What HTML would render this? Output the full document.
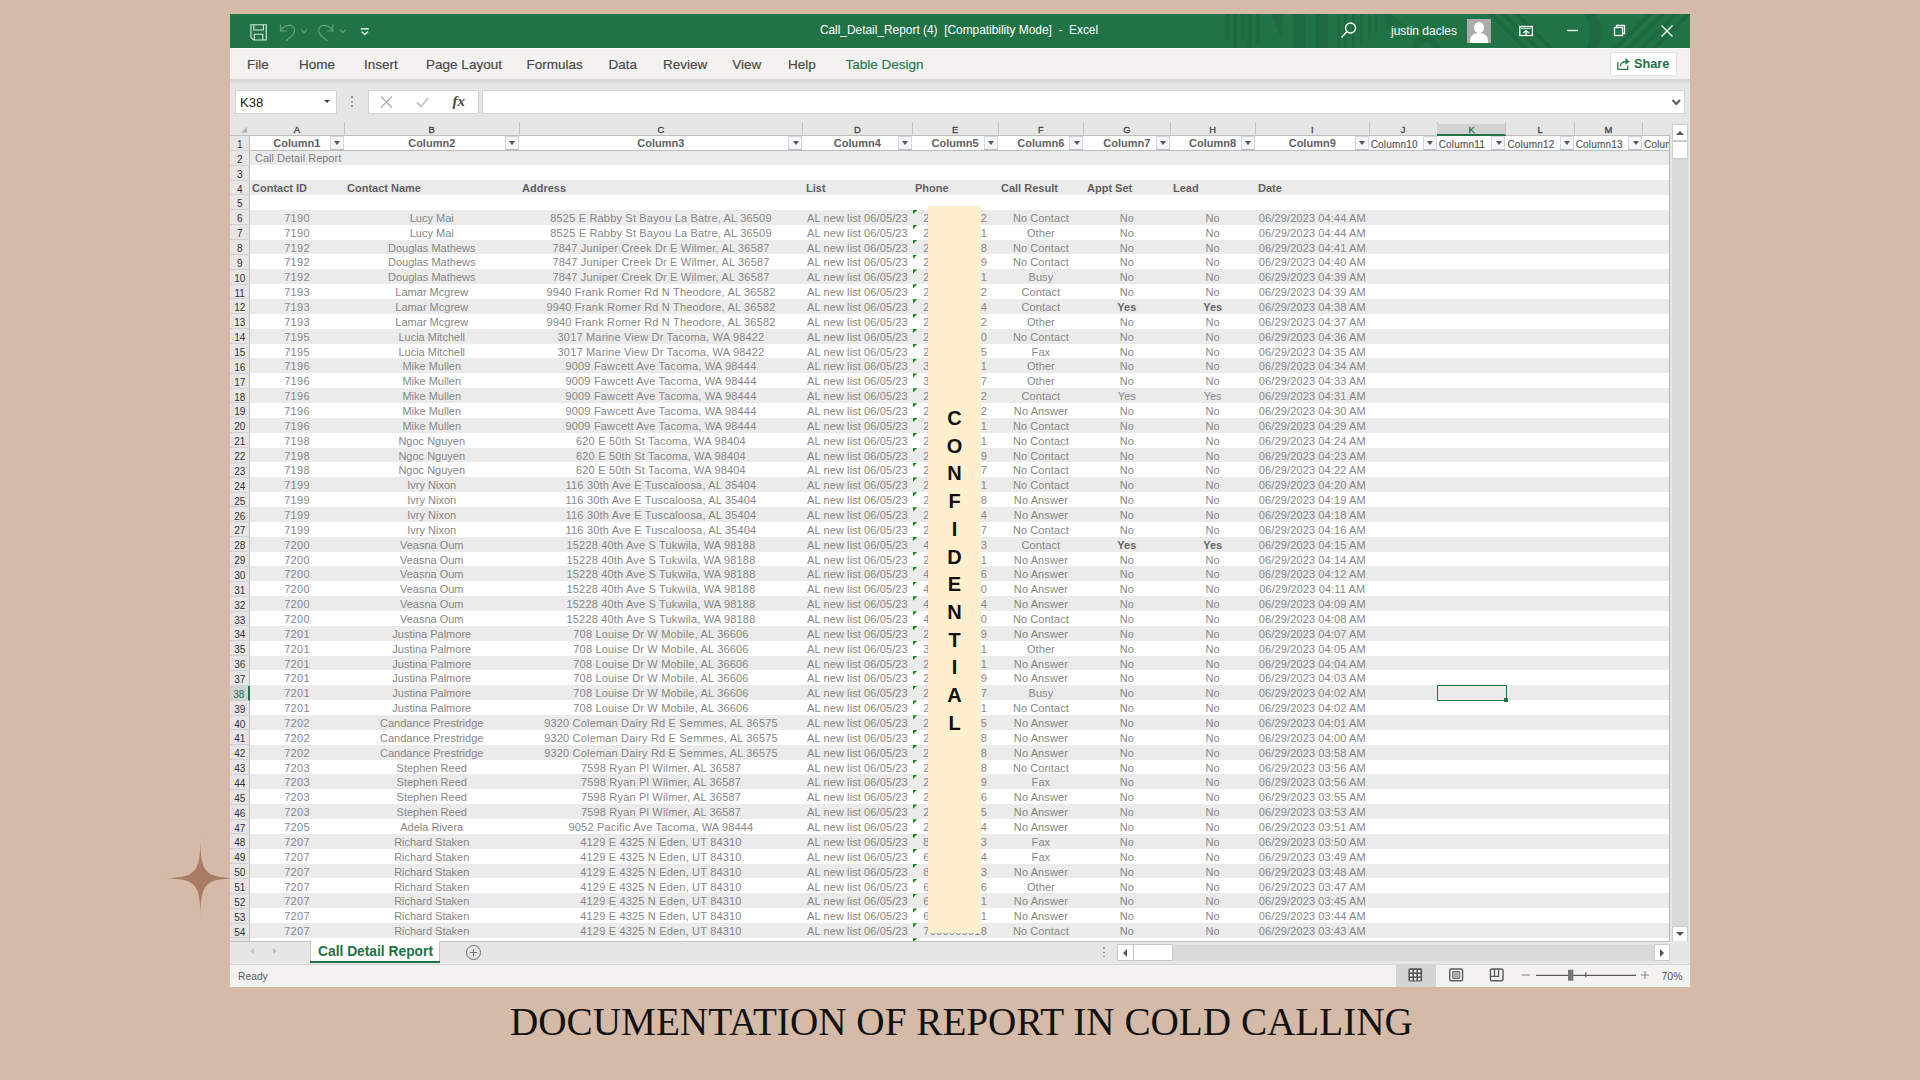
<!DOCTYPE html>
<html><head><meta charset="utf-8"><title>Excel</title>
<style>
html,body{margin:0;padding:0}
body{width:1920px;height:1080px;background:#d5baa8;position:relative;overflow:hidden;font-family:"Liberation Sans",sans-serif}
.a{position:absolute}
.t{position:absolute;white-space:nowrap}
.c{position:absolute;white-space:nowrap;text-align:center;font-size:11px;color:#878787;height:15px;line-height:15px}
.hd{position:absolute;white-space:nowrap;font-size:11px;font-weight:bold;color:#5f5f5f;line-height:15px}
.rn{position:absolute;left:230px;width:19.5px;text-align:center;font-size:10px;color:#262626;line-height:15px;border-bottom:1px solid #d0d0d0;box-sizing:border-box}
.tab{position:absolute;top:48.5px;height:31px;line-height:31px;font-size:13.5px;color:#4a4a4a;-webkit-text-stroke:0.2px #4a4a4a}
.tri{position:absolute;width:4.3px;height:4.3px;background:#168a16;clip-path:polygon(0 0,100% 0,0 100%)}
.dd{position:absolute;width:14px;height:14.5px;background:#f4f6f9;border:1px solid #d3d7dd;border-bottom-color:#b8bcc4;box-sizing:border-box}
.dd:after{content:"";position:absolute;left:3.5px;top:4.5px;border-left:3px solid transparent;border-right:3px solid transparent;border-top:4px solid #555}
</style></head><body>

<svg class="a" style="left:150px;top:826px" width="100" height="104" viewBox="0 0 100 104">
<path d="M50.4 11.0 C50.4 47.9 54.7 52.2 91.6 52.2 C54.7 52.2 50.4 56.5 50.4 93.4 C50.4 56.5 46.1 52.2 9.2 52.2 C46.1 52.2 50.4 47.9 50.4 11.0 Z" fill="#a87c62"/>
</svg>
<div class="a" style="left:230px;top:14px;width:1460px;height:973px;background:#e6e6e6"></div>
<div class="a" style="left:230px;top:14px;width:1460px;height:34px;background:#217346;overflow:hidden">
<svg class="a" style="left:980px;top:0" width="480" height="34" viewBox="1210 0 480 34">
<g fill="#1f6941">
<rect x="1225.6" y="0" width="4.2" height="26"/><rect x="1233" y="0" width="4" height="34"/><rect x="1240.7" y="0" width="3.9" height="26"/>
<rect x="1247.5" y="0" width="3.8" height="34"/><rect x="1255.8" y="0" width="3.8" height="31"/>
<path d="M1271 0 H1284 L1281 24 Z"/>
<rect x="1292.8" y="0" width="12.5" height="34"/><rect x="1315.7" y="0" width="12.5" height="34"/>
<rect x="1337.5" y="0" width="2.5" height="34"/><rect x="1344" y="0" width="2.5" height="34"/><rect x="1352" y="0" width="2.5" height="34"/>
<rect x="1360" y="0" width="2.5" height="30"/><rect x="1368" y="0" width="2.5" height="26"/><rect x="1375" y="0" width="2" height="20"/>
<path d="M1385 0 C1390 0 1402 6 1404 14 C1400 10 1392 10 1387 16 C1384 10 1384 4 1385 0Z"/>
<path d="M1412 34 C1412 26 1420 20 1428 22 C1436 24 1440 30 1440 34 H1433 C1432 30 1428 27 1425 28 C1421 29 1419 31 1419 34Z"/>
<path d="M1488 0 H1494 L1528 34 H1522Z"/><path d="M1500 0 H1506 L1540 34 H1534Z"/><path d="M1514 0 H1520 L1554 34 H1548Z"/>
<path d="M1585 0 H1596 C1602 10 1602 24 1598 34 H1587 C1591 24 1591 10 1585 0Z"/>
</g></svg>
<svg class="a" style="left:1230px;top:0" width="230" height="34" viewBox="1460 0 230 34">
<g fill="#1f6941">
<path d="M1613 34 L1647 0 H1653 L1619 34Z"/><path d="M1626 34 L1660 0 H1666 L1632 34Z"/><path d="M1639 34 L1673 0 H1679 L1645 34Z"/><path d="M1652 34 L1686 0 H1690 V2 L1658 34Z"/>
</g></svg>
</div>
<svg class="a" style="left:246px;top:20px" width="130" height="24" viewBox="0 0 130 24">
<g fill="none" stroke="#d3e5da" stroke-width="1.15">
<path d="M4.9 4.7 H20.3 V20 H7.6 L4.9 17.3 Z"/><path d="M7.8 4.7 V10 H17.4 V4.7"/><path d="M8.3 20 V14.2 H16.8 V20"/>
</g>
<g fill="none" stroke="#63a07c" stroke-width="1.2">
<path d="M34.5 4.4 V11 H41"/><path d="M34.5 11 C38 4 48.6 3 48.6 10.5 C48.6 13.5 47 15 40 21"/><path d="M55.3 9.6 L58.1 12.6 L61 9.6"/>
<path d="M86.8 4.4 V11 H80.3"/><path d="M86.8 11 C83.3 4 72.7 3 72.7 10.5 C72.7 13.5 74.3 15 81.3 21"/><path d="M94 9.6 L96.75 12.6 L99.5 9.6"/>
</g>
<rect x="114.8" y="8" width="8" height="1.7" fill="#cfe2d6"/>
<path d="M115.6 11.6 L118.8 14.4 L122 11.6" fill="none" stroke="#cfe2d6" stroke-width="1.5"/>
</svg>
<div class="t" style="left:702px;top:14px;width:514px;text-align:center;line-height:32px;font-size:11.9px;color:#fff">Call_Detail_Report (4)&nbsp; [Compatibility Mode]&nbsp; -&nbsp; Excel</div>
<svg class="a" style="left:1336px;top:18px" width="350" height="26" viewBox="0 0 350 26">
<g fill="none" stroke="#fff" stroke-width="1.3">
<circle cx="14.5" cy="10" r="5"/><path d="M10.8 13.8 L5.5 19.5"/>
<rect x="183.8" y="8.5" width="12.6" height="9"/><path d="M185 10.3 H195.3" stroke-width="0.9"/><path d="M190.1 17 V12.3 M187.4 15 L190.1 12.3 L192.8 15"/>
<path d="M231 12.5 H242"/>
<rect x="278.5" y="9.5" width="8" height="8"/><path d="M280.5 9.5 V7.5 H288.5 V15.5 H286.5"/>
<path d="M325.5 7.5 L336.5 18.5 M336.5 7.5 L325.5 18.5"/>
</g></svg>
<div class="t" style="left:1391px;top:14px;line-height:34px;font-size:12px;color:#fff">justin dacles</div>
<div class="a" style="left:1467px;top:19px;width:24px;height:24px;background:#ababab;overflow:hidden">
<div class="a" style="left:7px;top:3px;width:10px;height:11px;border-radius:50%;background:#fff"></div>
<div class="a" style="left:3px;top:14px;width:18px;height:14px;border-radius:8px 8px 0 0;background:#fff"></div></div>
<div class="a" style="left:230px;top:48px;width:1460px;height:31px;background:#f3f2f1;border-top:1px solid #fbfafa;box-sizing:border-box"></div>
<div class="tab" style="left:247.0px">File</div>
<div class="tab" style="left:299.0px">Home</div>
<div class="tab" style="left:363.9px">Insert</div>
<div class="tab" style="left:426.1px">Page Layout</div>
<div class="tab" style="left:526.5px">Formulas</div>
<div class="tab" style="left:608.4px">Data</div>
<div class="tab" style="left:663.1px">Review</div>
<div class="tab" style="left:732.2px">View</div>
<div class="tab" style="left:788.0px">Help</div>
<div class="tab" style="left:845.5px;color:#2b7a4f;-webkit-text-stroke:0.2px #2b7a4f">Table Design</div>
<div class="a" style="left:1610px;top:52px;width:67px;height:23.5px;background:#fff;border:1px solid #e6e4e2;border-radius:2px;box-sizing:border-box"></div>
<svg class="a" style="left:1616px;top:56px" width="16" height="16" viewBox="0 0 16 16"><g fill="none" stroke="#2b7a4f" stroke-width="1.3"><path d="M1.8 6 V13.4 H11.7 V9.6"/><path d="M4.2 10.5 C4.6 7 7 5.5 10.5 5.5"/></g><path d="M9.5 1.8 L13.5 5.5 L9.5 9 Z" fill="#2b7a4f"/></svg>
<div class="t" style="left:1634px;top:52.5px;line-height:23px;font-size:12.7px;font-weight:bold;color:#217346">Share</div>
<div class="a" style="left:230px;top:79px;width:1460px;height:5px;background:linear-gradient(#d2d2d2,#e6e6e6)"></div>
<div class="a" style="left:235px;top:90px;width:102px;height:23.5px;background:#fff;border:1px solid #d4d4d4;box-sizing:border-box"></div>
<div class="t" style="left:240px;top:91px;line-height:23px;font-size:13px;color:#222">K38</div>
<div class="a" style="left:324px;top:100px;border-left:3px solid transparent;border-right:3px solid transparent;border-top:3px solid #444"></div>
<div class="a" style="left:351px;top:96px;width:2px;height:2px;background:#999"></div>
<div class="a" style="left:351px;top:100.5px;width:2px;height:2px;background:#999"></div>
<div class="a" style="left:351px;top:105px;width:2px;height:2px;background:#999"></div>
<div class="a" style="left:368px;top:90px;width:110.5px;height:23.5px;background:#fff;border:1px solid #d4d4d4;box-sizing:border-box"></div>
<svg class="a" style="left:370px;top:92px" width="108" height="20" viewBox="0 0 108 20"><g fill="none" stroke="#a9a9a9" stroke-width="1.2"><path d="M11 4.5 L22 15.5 M22 4.5 L11 15.5"/></g><g fill="none" stroke="#c2c2c2" stroke-width="1.8"><path d="M47 10.5 L51 14.5 L58 6"/></g></svg>
<div class="t" style="left:452.5px;top:90px;line-height:23px;font-size:15px;font-weight:bold;font-style:italic;font-family:'Liberation Serif',serif;color:#4a4a4a">fx</div>
<div class="a" style="left:482px;top:90px;width:1203px;height:23.5px;background:#fff;border:1px solid #d4d4d4;box-sizing:border-box"></div>
<svg class="a" style="left:1668px;top:96px" width="14" height="12" viewBox="0 0 14 12"><path d="M4.5 4 L8.3 8 L12 4" fill="none" stroke="#5a5a5a" stroke-width="2"/></svg>
<div class="a" style="left:230px;top:123px;width:1440px;height:13px;background:#e6e6e6;border-bottom:1px solid #bdbdbd;box-sizing:border-box"></div>
<div class="a" style="left:241px;top:126.6px;width:6px;height:6.2px;background:#b4b4b4;clip-path:polygon(100% 0,100% 100%,0 100%)"></div>
<div class="t" style="left:249.5px;top:123px;width:94.69999999999999px;text-align:center;line-height:13px;font-size:9.4px;color:#444;-webkit-text-stroke:0.3px #444">A</div>
<div class="a" style="left:343.7px;top:122px;width:1px;height:13px;background:#c4c4c4"></div>
<div class="t" style="left:344.2px;top:123px;width:175.09999999999997px;text-align:center;line-height:13px;font-size:9.4px;color:#444;-webkit-text-stroke:0.3px #444">B</div>
<div class="a" style="left:518.8px;top:122px;width:1px;height:13px;background:#c4c4c4"></div>
<div class="t" style="left:519.3px;top:123px;width:283.20000000000005px;text-align:center;line-height:13px;font-size:9.4px;color:#444;-webkit-text-stroke:0.3px #444">C</div>
<div class="a" style="left:802.0px;top:122px;width:1px;height:13px;background:#c4c4c4"></div>
<div class="t" style="left:802.5px;top:123px;width:109.70000000000005px;text-align:center;line-height:13px;font-size:9.4px;color:#444;-webkit-text-stroke:0.3px #444">D</div>
<div class="a" style="left:911.7px;top:122px;width:1px;height:13px;background:#c4c4c4"></div>
<div class="t" style="left:912.2px;top:123px;width:85.79999999999995px;text-align:center;line-height:13px;font-size:9.4px;color:#444;-webkit-text-stroke:0.3px #444">E</div>
<div class="a" style="left:997.5px;top:122px;width:1px;height:13px;background:#c4c4c4"></div>
<div class="t" style="left:998.0px;top:123px;width:85.70000000000005px;text-align:center;line-height:13px;font-size:9.4px;color:#444;-webkit-text-stroke:0.3px #444">F</div>
<div class="a" style="left:1083.2px;top:122px;width:1px;height:13px;background:#c4c4c4"></div>
<div class="t" style="left:1083.7px;top:123px;width:86.29999999999995px;text-align:center;line-height:13px;font-size:9.4px;color:#444;-webkit-text-stroke:0.3px #444">G</div>
<div class="a" style="left:1169.5px;top:122px;width:1px;height:13px;background:#c4c4c4"></div>
<div class="t" style="left:1170.0px;top:123px;width:85.29999999999995px;text-align:center;line-height:13px;font-size:9.4px;color:#444;-webkit-text-stroke:0.3px #444">H</div>
<div class="a" style="left:1254.8px;top:122px;width:1px;height:13px;background:#c4c4c4"></div>
<div class="t" style="left:1255.3px;top:123px;width:113.90000000000009px;text-align:center;line-height:13px;font-size:9.4px;color:#444;-webkit-text-stroke:0.3px #444">I</div>
<div class="a" style="left:1368.7px;top:122px;width:1px;height:13px;background:#c4c4c4"></div>
<div class="t" style="left:1369.2px;top:123px;width:68.0px;text-align:center;line-height:13px;font-size:9.4px;color:#444;-webkit-text-stroke:0.3px #444">J</div>
<div class="a" style="left:1436.7px;top:122px;width:1px;height:13px;background:#c4c4c4"></div>
<div class="a" style="left:1437.2px;top:124px;width:68.70000000000005px;height:12px;background:#d2d2d2;border-bottom:2px solid #217346;box-sizing:border-box"></div>
<div class="t" style="left:1437.2px;top:123px;width:68.70000000000005px;text-align:center;line-height:13px;font-size:9.4px;color:#217346;-webkit-text-stroke:0.3px #217346">K</div>
<div class="a" style="left:1505.4px;top:122px;width:1px;height:13px;background:#c4c4c4"></div>
<div class="t" style="left:1505.9px;top:123px;width:68.29999999999995px;text-align:center;line-height:13px;font-size:9.4px;color:#444;-webkit-text-stroke:0.3px #444">L</div>
<div class="a" style="left:1573.7px;top:122px;width:1px;height:13px;background:#c4c4c4"></div>
<div class="t" style="left:1574.2px;top:123px;width:68.29999999999995px;text-align:center;line-height:13px;font-size:9.4px;color:#444;-webkit-text-stroke:0.3px #444">M</div>
<div class="a" style="left:1642.0px;top:122px;width:1px;height:13px;background:#c4c4c4"></div>
<div class="a" style="left:1669.5px;top:123px;width:20.5px;height:818px;background:#e6e6e6"></div>
<div class="a" style="left:249.5px;top:135.5px;width:1420.0px;height:805.5px;background:#fff;overflow:hidden">
<div class="a" style="left:0;top:14.86px;width:1420px;height:14.860px;background:#ebebeb"></div>
<div class="a" style="left:0;top:44.58px;width:1420px;height:14.860px;background:#ebebeb"></div>
<div class="a" style="left:0;top:74.30px;width:1420px;height:14.860px;background:#ebebeb"></div>
<div class="a" style="left:0;top:104.02px;width:1420px;height:14.860px;background:#ebebeb"></div>
<div class="a" style="left:0;top:133.74px;width:1420px;height:14.860px;background:#ebebeb"></div>
<div class="a" style="left:0;top:163.46px;width:1420px;height:14.860px;background:#ebebeb"></div>
<div class="a" style="left:0;top:193.18px;width:1420px;height:14.860px;background:#ebebeb"></div>
<div class="a" style="left:0;top:222.90px;width:1420px;height:14.860px;background:#ebebeb"></div>
<div class="a" style="left:0;top:252.62px;width:1420px;height:14.860px;background:#ebebeb"></div>
<div class="a" style="left:0;top:282.34px;width:1420px;height:14.860px;background:#ebebeb"></div>
<div class="a" style="left:0;top:312.06px;width:1420px;height:14.860px;background:#ebebeb"></div>
<div class="a" style="left:0;top:341.78px;width:1420px;height:14.860px;background:#ebebeb"></div>
<div class="a" style="left:0;top:371.50px;width:1420px;height:14.860px;background:#ebebeb"></div>
<div class="a" style="left:0;top:401.22px;width:1420px;height:14.860px;background:#ebebeb"></div>
<div class="a" style="left:0;top:430.94px;width:1420px;height:14.860px;background:#ebebeb"></div>
<div class="a" style="left:0;top:460.66px;width:1420px;height:14.860px;background:#ebebeb"></div>
<div class="a" style="left:0;top:490.38px;width:1420px;height:14.860px;background:#ebebeb"></div>
<div class="a" style="left:0;top:520.10px;width:1420px;height:14.860px;background:#ebebeb"></div>
<div class="a" style="left:0;top:549.82px;width:1420px;height:14.860px;background:#ebebeb"></div>
<div class="a" style="left:0;top:579.54px;width:1420px;height:14.860px;background:#ebebeb"></div>
<div class="a" style="left:0;top:609.26px;width:1420px;height:14.860px;background:#ebebeb"></div>
<div class="a" style="left:0;top:638.98px;width:1420px;height:14.860px;background:#ebebeb"></div>
<div class="a" style="left:0;top:668.70px;width:1420px;height:14.860px;background:#ebebeb"></div>
<div class="a" style="left:0;top:698.42px;width:1420px;height:14.860px;background:#ebebeb"></div>
<div class="a" style="left:0;top:728.14px;width:1420px;height:14.860px;background:#ebebeb"></div>
<div class="a" style="left:0;top:757.86px;width:1420px;height:14.860px;background:#ebebeb"></div>
<div class="a" style="left:0;top:787.58px;width:1420px;height:14.860px;background:#ebebeb"></div>
</div>
<div class="a" style="left:230px;top:135.5px;width:19.5px;height:805.5px;background:#e6e6e6;border-right:1px solid #bdbdbd;box-sizing:border-box"></div>
<div class="rn" style="top:136.00px;height:14.86px;line-height:17.46px;color:#333">1</div>
<div class="rn" style="top:150.86px;height:14.86px;line-height:17.46px;color:#333">2</div>
<div class="rn" style="top:165.72px;height:14.86px;line-height:17.46px;color:#333">3</div>
<div class="rn" style="top:180.58px;height:14.86px;line-height:17.46px;color:#333">4</div>
<div class="rn" style="top:195.44px;height:14.86px;line-height:17.46px;color:#333">5</div>
<div class="rn" style="top:210.30px;height:14.86px;line-height:17.46px;color:#333">6</div>
<div class="rn" style="top:225.16px;height:14.86px;line-height:17.46px;color:#333">7</div>
<div class="rn" style="top:240.02px;height:14.86px;line-height:17.46px;color:#333">8</div>
<div class="rn" style="top:254.88px;height:14.86px;line-height:17.46px;color:#333">9</div>
<div class="rn" style="top:269.74px;height:14.86px;line-height:17.46px;color:#333">10</div>
<div class="rn" style="top:284.60px;height:14.86px;line-height:17.46px;color:#333">11</div>
<div class="rn" style="top:299.46px;height:14.86px;line-height:17.46px;color:#333">12</div>
<div class="rn" style="top:314.32px;height:14.86px;line-height:17.46px;color:#333">13</div>
<div class="rn" style="top:329.18px;height:14.86px;line-height:17.46px;color:#333">14</div>
<div class="rn" style="top:344.04px;height:14.86px;line-height:17.46px;color:#333">15</div>
<div class="rn" style="top:358.90px;height:14.86px;line-height:17.46px;color:#333">16</div>
<div class="rn" style="top:373.76px;height:14.86px;line-height:17.46px;color:#333">17</div>
<div class="rn" style="top:388.62px;height:14.86px;line-height:17.46px;color:#333">18</div>
<div class="rn" style="top:403.48px;height:14.86px;line-height:17.46px;color:#333">19</div>
<div class="rn" style="top:418.34px;height:14.86px;line-height:17.46px;color:#333">20</div>
<div class="rn" style="top:433.20px;height:14.86px;line-height:17.46px;color:#333">21</div>
<div class="rn" style="top:448.06px;height:14.86px;line-height:17.46px;color:#333">22</div>
<div class="rn" style="top:462.92px;height:14.86px;line-height:17.46px;color:#333">23</div>
<div class="rn" style="top:477.78px;height:14.86px;line-height:17.46px;color:#333">24</div>
<div class="rn" style="top:492.64px;height:14.86px;line-height:17.46px;color:#333">25</div>
<div class="rn" style="top:507.50px;height:14.86px;line-height:17.46px;color:#333">26</div>
<div class="rn" style="top:522.36px;height:14.86px;line-height:17.46px;color:#333">27</div>
<div class="rn" style="top:537.22px;height:14.86px;line-height:17.46px;color:#333">28</div>
<div class="rn" style="top:552.08px;height:14.86px;line-height:17.46px;color:#333">29</div>
<div class="rn" style="top:566.94px;height:14.86px;line-height:17.46px;color:#333">30</div>
<div class="rn" style="top:581.80px;height:14.86px;line-height:17.46px;color:#333">31</div>
<div class="rn" style="top:596.66px;height:14.86px;line-height:17.46px;color:#333">32</div>
<div class="rn" style="top:611.52px;height:14.86px;line-height:17.46px;color:#333">33</div>
<div class="rn" style="top:626.38px;height:14.86px;line-height:17.46px;color:#333">34</div>
<div class="rn" style="top:641.24px;height:14.86px;line-height:17.46px;color:#333">35</div>
<div class="rn" style="top:656.10px;height:14.86px;line-height:17.46px;color:#333">36</div>
<div class="rn" style="top:670.96px;height:14.86px;line-height:17.46px;color:#333">37</div>
<div class="rn" style="top:685.82px;height:14.86px;line-height:17.46px;color:#217346;background:#d2d2d2;border-right:2px solid #217346">38</div>
<div class="rn" style="top:700.68px;height:14.86px;line-height:17.46px;color:#333">39</div>
<div class="rn" style="top:715.54px;height:14.86px;line-height:17.46px;color:#333">40</div>
<div class="rn" style="top:730.40px;height:14.86px;line-height:17.46px;color:#333">41</div>
<div class="rn" style="top:745.26px;height:14.86px;line-height:17.46px;color:#333">42</div>
<div class="rn" style="top:760.12px;height:14.86px;line-height:17.46px;color:#333">43</div>
<div class="rn" style="top:774.98px;height:14.86px;line-height:17.46px;color:#333">44</div>
<div class="rn" style="top:789.84px;height:14.86px;line-height:17.46px;color:#333">45</div>
<div class="rn" style="top:804.70px;height:14.86px;line-height:17.46px;color:#333">46</div>
<div class="rn" style="top:819.56px;height:14.86px;line-height:17.46px;color:#333">47</div>
<div class="rn" style="top:834.42px;height:14.86px;line-height:17.46px;color:#333">48</div>
<div class="rn" style="top:849.28px;height:14.86px;line-height:17.46px;color:#333">49</div>
<div class="rn" style="top:864.14px;height:14.86px;line-height:17.46px;color:#333">50</div>
<div class="rn" style="top:879.00px;height:14.86px;line-height:17.46px;color:#333">51</div>
<div class="rn" style="top:893.86px;height:14.86px;line-height:17.46px;color:#333">52</div>
<div class="rn" style="top:908.72px;height:14.86px;line-height:17.46px;color:#333">53</div>
<div class="rn" style="top:923.58px;height:14.86px;line-height:17.46px;color:#333">54</div>
<div class="rn" style="top:938.44px;height:14.86px;line-height:17.46px;color:#333">55</div>
<div class="a" style="left:249.5px;top:149.66px;width:1420.0px;height:1px;background:#bdbdbd"></div>
<div class="hd" style="left:249.5px;top:134.70px;width:94.69999999999999px;text-align:center;color:#5f5f5f;line-height:16px">Column1</div>
<div class="dd" style="left:329.7px;top:135.50px"></div>
<div class="hd" style="left:344.2px;top:134.70px;width:175.09999999999997px;text-align:center;color:#5f5f5f;line-height:16px">Column2</div>
<div class="dd" style="left:504.79999999999995px;top:135.50px"></div>
<div class="hd" style="left:519.3px;top:134.70px;width:283.20000000000005px;text-align:center;color:#5f5f5f;line-height:16px">Column3</div>
<div class="dd" style="left:788.0px;top:135.50px"></div>
<div class="hd" style="left:802.5px;top:134.70px;width:109.70000000000005px;text-align:center;color:#5f5f5f;line-height:16px">Column4</div>
<div class="dd" style="left:897.7px;top:135.50px"></div>
<div class="hd" style="left:912.2px;top:134.70px;width:85.79999999999995px;text-align:center;color:#5f5f5f;line-height:16px">Column5</div>
<div class="dd" style="left:983.5px;top:135.50px"></div>
<div class="hd" style="left:998.0px;top:134.70px;width:85.70000000000005px;text-align:center;color:#5f5f5f;line-height:16px">Column6</div>
<div class="dd" style="left:1069.2px;top:135.50px"></div>
<div class="hd" style="left:1083.7px;top:134.70px;width:86.29999999999995px;text-align:center;color:#5f5f5f;line-height:16px">Column7</div>
<div class="dd" style="left:1155.5px;top:135.50px"></div>
<div class="hd" style="left:1170.0px;top:134.70px;width:85.29999999999995px;text-align:center;color:#5f5f5f;line-height:16px">Column8</div>
<div class="dd" style="left:1240.8px;top:135.50px"></div>
<div class="hd" style="left:1255.3px;top:134.70px;width:113.90000000000009px;text-align:center;color:#5f5f5f;line-height:16px">Column9</div>
<div class="dd" style="left:1354.7px;top:135.50px"></div>
<div class="hd" style="left:1370.7px;top:136.10px;font-size:10px;font-weight:normal;color:#555;line-height:17px;letter-spacing:0.2px;-webkit-text-stroke:0.15px #555">Column10</div>
<div class="dd" style="left:1422.7px;top:135.50px"></div>
<div class="hd" style="left:1438.7px;top:136.10px;font-size:10px;font-weight:normal;color:#555;line-height:17px;letter-spacing:0.2px;-webkit-text-stroke:0.15px #555">Column11</div>
<div class="dd" style="left:1491.4px;top:135.50px"></div>
<div class="hd" style="left:1507.4px;top:136.10px;font-size:10px;font-weight:normal;color:#555;line-height:17px;letter-spacing:0.2px;-webkit-text-stroke:0.15px #555">Column12</div>
<div class="dd" style="left:1559.7px;top:135.50px"></div>
<div class="hd" style="left:1575.7px;top:136.10px;font-size:10px;font-weight:normal;color:#555;line-height:17px;letter-spacing:0.2px;-webkit-text-stroke:0.15px #555">Column13</div>
<div class="dd" style="left:1628.0px;top:135.50px"></div>
<div class="hd" style="left:1644.0px;top:136.10px;font-size:10px;font-weight:normal;color:#555;line-height:17px;letter-spacing:0.2px;-webkit-text-stroke:0.15px #555;width:26px;overflow:hidden">Column14</div>
<div class="t" style="left:255px;top:151.06px;line-height:15.86px;font-size:11px;color:#7f7f7f">Call Detail Report</div>
<div class="hd" style="left:252px;top:180.88px;line-height:15.86px">Contact ID</div>
<div class="hd" style="left:347px;top:180.88px;line-height:15.86px">Contact Name</div>
<div class="hd" style="left:522px;top:180.88px;line-height:15.86px">Address</div>
<div class="hd" style="left:806px;top:180.88px;line-height:15.86px">List</div>
<div class="hd" style="left:915px;top:180.88px;line-height:15.86px">Phone</div>
<div class="hd" style="left:1001px;top:180.88px;line-height:15.86px">Call Result</div>
<div class="hd" style="left:1087px;top:180.88px;line-height:15.86px">Appt Set</div>
<div class="hd" style="left:1173px;top:180.88px;line-height:15.86px">Lead</div>
<div class="hd" style="left:1258px;top:180.88px;line-height:15.86px">Date</div>
<div class="c" style="left:249.5px;top:209.80px;width:94.69999999999999px;line-height:16.06px;letter-spacing:0.3px;text-indent:0.3px">7190</div>
<div class="c" style="left:344.2px;top:209.80px;width:175.09999999999997px;line-height:16.06px">Lucy Mai</div>
<div class="c" style="left:519.3px;top:209.80px;width:283.20000000000005px;line-height:16.06px;letter-spacing:0.18px;text-indent:0.18px">8525 E Rabby St Bayou La Batre, AL 36509</div>
<div class="c" style="left:802.5px;top:209.80px;width:109.70000000000005px;line-height:16.06px;letter-spacing:0.1px;text-indent:0.1px">AL new list 06/05/23</div>
<div class="c" style="left:912.2px;top:209.80px;width:85.79999999999995px;line-height:16.06px;letter-spacing:0.25px;text-indent:0.25px">2000000002</div>
<div class="c" style="left:998.0px;top:209.80px;width:85.70000000000005px;line-height:16.06px;letter-spacing:0.1px;text-indent:0.1px">No Contact</div>
<div class="c" style="left:1083.7px;top:209.80px;width:86.29999999999995px;line-height:16.06px">No</div>
<div class="c" style="left:1170.0px;top:209.80px;width:85.29999999999995px;line-height:16.06px">No</div>
<div class="c" style="left:1255.3px;top:209.80px;width:113.90000000000009px;line-height:16.06px;letter-spacing:0.12px;text-indent:0.12px">06/29/2023 04:44 AM</div>
<div class="tri" style="left:913px;top:210.00px"></div>
<div class="c" style="left:249.5px;top:224.66px;width:94.69999999999999px;line-height:16.06px;letter-spacing:0.3px;text-indent:0.3px">7190</div>
<div class="c" style="left:344.2px;top:224.66px;width:175.09999999999997px;line-height:16.06px">Lucy Mai</div>
<div class="c" style="left:519.3px;top:224.66px;width:283.20000000000005px;line-height:16.06px;letter-spacing:0.18px;text-indent:0.18px">8525 E Rabby St Bayou La Batre, AL 36509</div>
<div class="c" style="left:802.5px;top:224.66px;width:109.70000000000005px;line-height:16.06px;letter-spacing:0.1px;text-indent:0.1px">AL new list 06/05/23</div>
<div class="c" style="left:912.2px;top:224.66px;width:85.79999999999995px;line-height:16.06px;letter-spacing:0.25px;text-indent:0.25px">2000000001</div>
<div class="c" style="left:998.0px;top:224.66px;width:85.70000000000005px;line-height:16.06px;letter-spacing:0.1px;text-indent:0.1px">Other</div>
<div class="c" style="left:1083.7px;top:224.66px;width:86.29999999999995px;line-height:16.06px">No</div>
<div class="c" style="left:1170.0px;top:224.66px;width:85.29999999999995px;line-height:16.06px">No</div>
<div class="c" style="left:1255.3px;top:224.66px;width:113.90000000000009px;line-height:16.06px;letter-spacing:0.12px;text-indent:0.12px">06/29/2023 04:44 AM</div>
<div class="tri" style="left:913px;top:224.86px"></div>
<div class="c" style="left:249.5px;top:239.52px;width:94.69999999999999px;line-height:16.06px;letter-spacing:0.3px;text-indent:0.3px">7192</div>
<div class="c" style="left:344.2px;top:239.52px;width:175.09999999999997px;line-height:16.06px">Douglas Mathews</div>
<div class="c" style="left:519.3px;top:239.52px;width:283.20000000000005px;line-height:16.06px;letter-spacing:0.18px;text-indent:0.18px">7847 Juniper Creek Dr E Wilmer, AL 36587</div>
<div class="c" style="left:802.5px;top:239.52px;width:109.70000000000005px;line-height:16.06px;letter-spacing:0.1px;text-indent:0.1px">AL new list 06/05/23</div>
<div class="c" style="left:912.2px;top:239.52px;width:85.79999999999995px;line-height:16.06px;letter-spacing:0.25px;text-indent:0.25px">2000000008</div>
<div class="c" style="left:998.0px;top:239.52px;width:85.70000000000005px;line-height:16.06px;letter-spacing:0.1px;text-indent:0.1px">No Contact</div>
<div class="c" style="left:1083.7px;top:239.52px;width:86.29999999999995px;line-height:16.06px">No</div>
<div class="c" style="left:1170.0px;top:239.52px;width:85.29999999999995px;line-height:16.06px">No</div>
<div class="c" style="left:1255.3px;top:239.52px;width:113.90000000000009px;line-height:16.06px;letter-spacing:0.12px;text-indent:0.12px">06/29/2023 04:41 AM</div>
<div class="tri" style="left:913px;top:239.72px"></div>
<div class="c" style="left:249.5px;top:254.38px;width:94.69999999999999px;line-height:16.06px;letter-spacing:0.3px;text-indent:0.3px">7192</div>
<div class="c" style="left:344.2px;top:254.38px;width:175.09999999999997px;line-height:16.06px">Douglas Mathews</div>
<div class="c" style="left:519.3px;top:254.38px;width:283.20000000000005px;line-height:16.06px;letter-spacing:0.18px;text-indent:0.18px">7847 Juniper Creek Dr E Wilmer, AL 36587</div>
<div class="c" style="left:802.5px;top:254.38px;width:109.70000000000005px;line-height:16.06px;letter-spacing:0.1px;text-indent:0.1px">AL new list 06/05/23</div>
<div class="c" style="left:912.2px;top:254.38px;width:85.79999999999995px;line-height:16.06px;letter-spacing:0.25px;text-indent:0.25px">2000000009</div>
<div class="c" style="left:998.0px;top:254.38px;width:85.70000000000005px;line-height:16.06px;letter-spacing:0.1px;text-indent:0.1px">No Contact</div>
<div class="c" style="left:1083.7px;top:254.38px;width:86.29999999999995px;line-height:16.06px">No</div>
<div class="c" style="left:1170.0px;top:254.38px;width:85.29999999999995px;line-height:16.06px">No</div>
<div class="c" style="left:1255.3px;top:254.38px;width:113.90000000000009px;line-height:16.06px;letter-spacing:0.12px;text-indent:0.12px">06/29/2023 04:40 AM</div>
<div class="tri" style="left:913px;top:254.58px"></div>
<div class="c" style="left:249.5px;top:269.24px;width:94.69999999999999px;line-height:16.06px;letter-spacing:0.3px;text-indent:0.3px">7192</div>
<div class="c" style="left:344.2px;top:269.24px;width:175.09999999999997px;line-height:16.06px">Douglas Mathews</div>
<div class="c" style="left:519.3px;top:269.24px;width:283.20000000000005px;line-height:16.06px;letter-spacing:0.18px;text-indent:0.18px">7847 Juniper Creek Dr E Wilmer, AL 36587</div>
<div class="c" style="left:802.5px;top:269.24px;width:109.70000000000005px;line-height:16.06px;letter-spacing:0.1px;text-indent:0.1px">AL new list 06/05/23</div>
<div class="c" style="left:912.2px;top:269.24px;width:85.79999999999995px;line-height:16.06px;letter-spacing:0.25px;text-indent:0.25px">2000000001</div>
<div class="c" style="left:998.0px;top:269.24px;width:85.70000000000005px;line-height:16.06px;letter-spacing:0.1px;text-indent:0.1px">Busy</div>
<div class="c" style="left:1083.7px;top:269.24px;width:86.29999999999995px;line-height:16.06px">No</div>
<div class="c" style="left:1170.0px;top:269.24px;width:85.29999999999995px;line-height:16.06px">No</div>
<div class="c" style="left:1255.3px;top:269.24px;width:113.90000000000009px;line-height:16.06px;letter-spacing:0.12px;text-indent:0.12px">06/29/2023 04:39 AM</div>
<div class="tri" style="left:913px;top:269.44px"></div>
<div class="c" style="left:249.5px;top:284.10px;width:94.69999999999999px;line-height:16.06px;letter-spacing:0.3px;text-indent:0.3px">7193</div>
<div class="c" style="left:344.2px;top:284.10px;width:175.09999999999997px;line-height:16.06px">Lamar Mcgrew</div>
<div class="c" style="left:519.3px;top:284.10px;width:283.20000000000005px;line-height:16.06px;letter-spacing:0.18px;text-indent:0.18px">9940 Frank Romer Rd N Theodore, AL 36582</div>
<div class="c" style="left:802.5px;top:284.10px;width:109.70000000000005px;line-height:16.06px;letter-spacing:0.1px;text-indent:0.1px">AL new list 06/05/23</div>
<div class="c" style="left:912.2px;top:284.10px;width:85.79999999999995px;line-height:16.06px;letter-spacing:0.25px;text-indent:0.25px">2000000002</div>
<div class="c" style="left:998.0px;top:284.10px;width:85.70000000000005px;line-height:16.06px;letter-spacing:0.1px;text-indent:0.1px">Contact</div>
<div class="c" style="left:1083.7px;top:284.10px;width:86.29999999999995px;line-height:16.06px">No</div>
<div class="c" style="left:1170.0px;top:284.10px;width:85.29999999999995px;line-height:16.06px">No</div>
<div class="c" style="left:1255.3px;top:284.10px;width:113.90000000000009px;line-height:16.06px;letter-spacing:0.12px;text-indent:0.12px">06/29/2023 04:39 AM</div>
<div class="tri" style="left:913px;top:284.30px"></div>
<div class="c" style="left:249.5px;top:298.96px;width:94.69999999999999px;line-height:16.06px;letter-spacing:0.3px;text-indent:0.3px">7193</div>
<div class="c" style="left:344.2px;top:298.96px;width:175.09999999999997px;line-height:16.06px">Lamar Mcgrew</div>
<div class="c" style="left:519.3px;top:298.96px;width:283.20000000000005px;line-height:16.06px;letter-spacing:0.18px;text-indent:0.18px">9940 Frank Romer Rd N Theodore, AL 36582</div>
<div class="c" style="left:802.5px;top:298.96px;width:109.70000000000005px;line-height:16.06px;letter-spacing:0.1px;text-indent:0.1px">AL new list 06/05/23</div>
<div class="c" style="left:912.2px;top:298.96px;width:85.79999999999995px;line-height:16.06px;letter-spacing:0.25px;text-indent:0.25px">2000000004</div>
<div class="c" style="left:998.0px;top:298.96px;width:85.70000000000005px;line-height:16.06px;letter-spacing:0.1px;text-indent:0.1px">Contact</div>
<div class="c" style="left:1083.7px;top:298.96px;width:86.29999999999995px;line-height:16.06px;font-weight:bold;color:#666">Yes</div>
<div class="c" style="left:1170.0px;top:298.96px;width:85.29999999999995px;line-height:16.06px;font-weight:bold;color:#666">Yes</div>
<div class="c" style="left:1255.3px;top:298.96px;width:113.90000000000009px;line-height:16.06px;letter-spacing:0.12px;text-indent:0.12px">06/29/2023 04:38 AM</div>
<div class="tri" style="left:913px;top:299.16px"></div>
<div class="c" style="left:249.5px;top:313.82px;width:94.69999999999999px;line-height:16.06px;letter-spacing:0.3px;text-indent:0.3px">7193</div>
<div class="c" style="left:344.2px;top:313.82px;width:175.09999999999997px;line-height:16.06px">Lamar Mcgrew</div>
<div class="c" style="left:519.3px;top:313.82px;width:283.20000000000005px;line-height:16.06px;letter-spacing:0.18px;text-indent:0.18px">9940 Frank Romer Rd N Theodore, AL 36582</div>
<div class="c" style="left:802.5px;top:313.82px;width:109.70000000000005px;line-height:16.06px;letter-spacing:0.1px;text-indent:0.1px">AL new list 06/05/23</div>
<div class="c" style="left:912.2px;top:313.82px;width:85.79999999999995px;line-height:16.06px;letter-spacing:0.25px;text-indent:0.25px">2000000002</div>
<div class="c" style="left:998.0px;top:313.82px;width:85.70000000000005px;line-height:16.06px;letter-spacing:0.1px;text-indent:0.1px">Other</div>
<div class="c" style="left:1083.7px;top:313.82px;width:86.29999999999995px;line-height:16.06px">No</div>
<div class="c" style="left:1170.0px;top:313.82px;width:85.29999999999995px;line-height:16.06px">No</div>
<div class="c" style="left:1255.3px;top:313.82px;width:113.90000000000009px;line-height:16.06px;letter-spacing:0.12px;text-indent:0.12px">06/29/2023 04:37 AM</div>
<div class="tri" style="left:913px;top:314.02px"></div>
<div class="c" style="left:249.5px;top:328.68px;width:94.69999999999999px;line-height:16.06px;letter-spacing:0.3px;text-indent:0.3px">7195</div>
<div class="c" style="left:344.2px;top:328.68px;width:175.09999999999997px;line-height:16.06px">Lucia Mitchell</div>
<div class="c" style="left:519.3px;top:328.68px;width:283.20000000000005px;line-height:16.06px;letter-spacing:0.18px;text-indent:0.18px">3017 Marine View Dr Tacoma, WA 98422</div>
<div class="c" style="left:802.5px;top:328.68px;width:109.70000000000005px;line-height:16.06px;letter-spacing:0.1px;text-indent:0.1px">AL new list 06/05/23</div>
<div class="c" style="left:912.2px;top:328.68px;width:85.79999999999995px;line-height:16.06px;letter-spacing:0.25px;text-indent:0.25px">2000000000</div>
<div class="c" style="left:998.0px;top:328.68px;width:85.70000000000005px;line-height:16.06px;letter-spacing:0.1px;text-indent:0.1px">No Contact</div>
<div class="c" style="left:1083.7px;top:328.68px;width:86.29999999999995px;line-height:16.06px">No</div>
<div class="c" style="left:1170.0px;top:328.68px;width:85.29999999999995px;line-height:16.06px">No</div>
<div class="c" style="left:1255.3px;top:328.68px;width:113.90000000000009px;line-height:16.06px;letter-spacing:0.12px;text-indent:0.12px">06/29/2023 04:36 AM</div>
<div class="tri" style="left:913px;top:328.88px"></div>
<div class="c" style="left:249.5px;top:343.54px;width:94.69999999999999px;line-height:16.06px;letter-spacing:0.3px;text-indent:0.3px">7195</div>
<div class="c" style="left:344.2px;top:343.54px;width:175.09999999999997px;line-height:16.06px">Lucia Mitchell</div>
<div class="c" style="left:519.3px;top:343.54px;width:283.20000000000005px;line-height:16.06px;letter-spacing:0.18px;text-indent:0.18px">3017 Marine View Dr Tacoma, WA 98422</div>
<div class="c" style="left:802.5px;top:343.54px;width:109.70000000000005px;line-height:16.06px;letter-spacing:0.1px;text-indent:0.1px">AL new list 06/05/23</div>
<div class="c" style="left:912.2px;top:343.54px;width:85.79999999999995px;line-height:16.06px;letter-spacing:0.25px;text-indent:0.25px">2000000005</div>
<div class="c" style="left:998.0px;top:343.54px;width:85.70000000000005px;line-height:16.06px;letter-spacing:0.1px;text-indent:0.1px">Fax</div>
<div class="c" style="left:1083.7px;top:343.54px;width:86.29999999999995px;line-height:16.06px">No</div>
<div class="c" style="left:1170.0px;top:343.54px;width:85.29999999999995px;line-height:16.06px">No</div>
<div class="c" style="left:1255.3px;top:343.54px;width:113.90000000000009px;line-height:16.06px;letter-spacing:0.12px;text-indent:0.12px">06/29/2023 04:35 AM</div>
<div class="tri" style="left:913px;top:343.74px"></div>
<div class="c" style="left:249.5px;top:358.40px;width:94.69999999999999px;line-height:16.06px;letter-spacing:0.3px;text-indent:0.3px">7196</div>
<div class="c" style="left:344.2px;top:358.40px;width:175.09999999999997px;line-height:16.06px">Mike Mullen</div>
<div class="c" style="left:519.3px;top:358.40px;width:283.20000000000005px;line-height:16.06px;letter-spacing:0.18px;text-indent:0.18px">9009 Fawcett Ave Tacoma, WA 98444</div>
<div class="c" style="left:802.5px;top:358.40px;width:109.70000000000005px;line-height:16.06px;letter-spacing:0.1px;text-indent:0.1px">AL new list 06/05/23</div>
<div class="c" style="left:912.2px;top:358.40px;width:85.79999999999995px;line-height:16.06px;letter-spacing:0.25px;text-indent:0.25px">3000000001</div>
<div class="c" style="left:998.0px;top:358.40px;width:85.70000000000005px;line-height:16.06px;letter-spacing:0.1px;text-indent:0.1px">Other</div>
<div class="c" style="left:1083.7px;top:358.40px;width:86.29999999999995px;line-height:16.06px">No</div>
<div class="c" style="left:1170.0px;top:358.40px;width:85.29999999999995px;line-height:16.06px">No</div>
<div class="c" style="left:1255.3px;top:358.40px;width:113.90000000000009px;line-height:16.06px;letter-spacing:0.12px;text-indent:0.12px">06/29/2023 04:34 AM</div>
<div class="tri" style="left:913px;top:358.60px"></div>
<div class="c" style="left:249.5px;top:373.26px;width:94.69999999999999px;line-height:16.06px;letter-spacing:0.3px;text-indent:0.3px">7196</div>
<div class="c" style="left:344.2px;top:373.26px;width:175.09999999999997px;line-height:16.06px">Mike Mullen</div>
<div class="c" style="left:519.3px;top:373.26px;width:283.20000000000005px;line-height:16.06px;letter-spacing:0.18px;text-indent:0.18px">9009 Fawcett Ave Tacoma, WA 98444</div>
<div class="c" style="left:802.5px;top:373.26px;width:109.70000000000005px;line-height:16.06px;letter-spacing:0.1px;text-indent:0.1px">AL new list 06/05/23</div>
<div class="c" style="left:912.2px;top:373.26px;width:85.79999999999995px;line-height:16.06px;letter-spacing:0.25px;text-indent:0.25px">3000000007</div>
<div class="c" style="left:998.0px;top:373.26px;width:85.70000000000005px;line-height:16.06px;letter-spacing:0.1px;text-indent:0.1px">Other</div>
<div class="c" style="left:1083.7px;top:373.26px;width:86.29999999999995px;line-height:16.06px">No</div>
<div class="c" style="left:1170.0px;top:373.26px;width:85.29999999999995px;line-height:16.06px">No</div>
<div class="c" style="left:1255.3px;top:373.26px;width:113.90000000000009px;line-height:16.06px;letter-spacing:0.12px;text-indent:0.12px">06/29/2023 04:33 AM</div>
<div class="tri" style="left:913px;top:373.46px"></div>
<div class="c" style="left:249.5px;top:388.12px;width:94.69999999999999px;line-height:16.06px;letter-spacing:0.3px;text-indent:0.3px">7196</div>
<div class="c" style="left:344.2px;top:388.12px;width:175.09999999999997px;line-height:16.06px">Mike Mullen</div>
<div class="c" style="left:519.3px;top:388.12px;width:283.20000000000005px;line-height:16.06px;letter-spacing:0.18px;text-indent:0.18px">9009 Fawcett Ave Tacoma, WA 98444</div>
<div class="c" style="left:802.5px;top:388.12px;width:109.70000000000005px;line-height:16.06px;letter-spacing:0.1px;text-indent:0.1px">AL new list 06/05/23</div>
<div class="c" style="left:912.2px;top:388.12px;width:85.79999999999995px;line-height:16.06px;letter-spacing:0.25px;text-indent:0.25px">2000000002</div>
<div class="c" style="left:998.0px;top:388.12px;width:85.70000000000005px;line-height:16.06px;letter-spacing:0.1px;text-indent:0.1px">Contact</div>
<div class="c" style="left:1083.7px;top:388.12px;width:86.29999999999995px;line-height:16.06px">Yes</div>
<div class="c" style="left:1170.0px;top:388.12px;width:85.29999999999995px;line-height:16.06px">Yes</div>
<div class="c" style="left:1255.3px;top:388.12px;width:113.90000000000009px;line-height:16.06px;letter-spacing:0.12px;text-indent:0.12px">06/29/2023 04:31 AM</div>
<div class="tri" style="left:913px;top:388.32px"></div>
<div class="c" style="left:249.5px;top:402.98px;width:94.69999999999999px;line-height:16.06px;letter-spacing:0.3px;text-indent:0.3px">7196</div>
<div class="c" style="left:344.2px;top:402.98px;width:175.09999999999997px;line-height:16.06px">Mike Mullen</div>
<div class="c" style="left:519.3px;top:402.98px;width:283.20000000000005px;line-height:16.06px;letter-spacing:0.18px;text-indent:0.18px">9009 Fawcett Ave Tacoma, WA 98444</div>
<div class="c" style="left:802.5px;top:402.98px;width:109.70000000000005px;line-height:16.06px;letter-spacing:0.1px;text-indent:0.1px">AL new list 06/05/23</div>
<div class="c" style="left:912.2px;top:402.98px;width:85.79999999999995px;line-height:16.06px;letter-spacing:0.25px;text-indent:0.25px">2000000002</div>
<div class="c" style="left:998.0px;top:402.98px;width:85.70000000000005px;line-height:16.06px;letter-spacing:0.1px;text-indent:0.1px">No Answer</div>
<div class="c" style="left:1083.7px;top:402.98px;width:86.29999999999995px;line-height:16.06px">No</div>
<div class="c" style="left:1170.0px;top:402.98px;width:85.29999999999995px;line-height:16.06px">No</div>
<div class="c" style="left:1255.3px;top:402.98px;width:113.90000000000009px;line-height:16.06px;letter-spacing:0.12px;text-indent:0.12px">06/29/2023 04:30 AM</div>
<div class="tri" style="left:913px;top:403.18px"></div>
<div class="c" style="left:249.5px;top:417.84px;width:94.69999999999999px;line-height:16.06px;letter-spacing:0.3px;text-indent:0.3px">7196</div>
<div class="c" style="left:344.2px;top:417.84px;width:175.09999999999997px;line-height:16.06px">Mike Mullen</div>
<div class="c" style="left:519.3px;top:417.84px;width:283.20000000000005px;line-height:16.06px;letter-spacing:0.18px;text-indent:0.18px">9009 Fawcett Ave Tacoma, WA 98444</div>
<div class="c" style="left:802.5px;top:417.84px;width:109.70000000000005px;line-height:16.06px;letter-spacing:0.1px;text-indent:0.1px">AL new list 06/05/23</div>
<div class="c" style="left:912.2px;top:417.84px;width:85.79999999999995px;line-height:16.06px;letter-spacing:0.25px;text-indent:0.25px">2000000001</div>
<div class="c" style="left:998.0px;top:417.84px;width:85.70000000000005px;line-height:16.06px;letter-spacing:0.1px;text-indent:0.1px">No Contact</div>
<div class="c" style="left:1083.7px;top:417.84px;width:86.29999999999995px;line-height:16.06px">No</div>
<div class="c" style="left:1170.0px;top:417.84px;width:85.29999999999995px;line-height:16.06px">No</div>
<div class="c" style="left:1255.3px;top:417.84px;width:113.90000000000009px;line-height:16.06px;letter-spacing:0.12px;text-indent:0.12px">06/29/2023 04:29 AM</div>
<div class="tri" style="left:913px;top:418.04px"></div>
<div class="c" style="left:249.5px;top:432.70px;width:94.69999999999999px;line-height:16.06px;letter-spacing:0.3px;text-indent:0.3px">7198</div>
<div class="c" style="left:344.2px;top:432.70px;width:175.09999999999997px;line-height:16.06px">Ngoc Nguyen</div>
<div class="c" style="left:519.3px;top:432.70px;width:283.20000000000005px;line-height:16.06px;letter-spacing:0.18px;text-indent:0.18px">620 E 50th St Tacoma, WA 98404</div>
<div class="c" style="left:802.5px;top:432.70px;width:109.70000000000005px;line-height:16.06px;letter-spacing:0.1px;text-indent:0.1px">AL new list 06/05/23</div>
<div class="c" style="left:912.2px;top:432.70px;width:85.79999999999995px;line-height:16.06px;letter-spacing:0.25px;text-indent:0.25px">2000000001</div>
<div class="c" style="left:998.0px;top:432.70px;width:85.70000000000005px;line-height:16.06px;letter-spacing:0.1px;text-indent:0.1px">No Contact</div>
<div class="c" style="left:1083.7px;top:432.70px;width:86.29999999999995px;line-height:16.06px">No</div>
<div class="c" style="left:1170.0px;top:432.70px;width:85.29999999999995px;line-height:16.06px">No</div>
<div class="c" style="left:1255.3px;top:432.70px;width:113.90000000000009px;line-height:16.06px;letter-spacing:0.12px;text-indent:0.12px">06/29/2023 04:24 AM</div>
<div class="tri" style="left:913px;top:432.90px"></div>
<div class="c" style="left:249.5px;top:447.56px;width:94.69999999999999px;line-height:16.06px;letter-spacing:0.3px;text-indent:0.3px">7198</div>
<div class="c" style="left:344.2px;top:447.56px;width:175.09999999999997px;line-height:16.06px">Ngoc Nguyen</div>
<div class="c" style="left:519.3px;top:447.56px;width:283.20000000000005px;line-height:16.06px;letter-spacing:0.18px;text-indent:0.18px">620 E 50th St Tacoma, WA 98404</div>
<div class="c" style="left:802.5px;top:447.56px;width:109.70000000000005px;line-height:16.06px;letter-spacing:0.1px;text-indent:0.1px">AL new list 06/05/23</div>
<div class="c" style="left:912.2px;top:447.56px;width:85.79999999999995px;line-height:16.06px;letter-spacing:0.25px;text-indent:0.25px">2000000009</div>
<div class="c" style="left:998.0px;top:447.56px;width:85.70000000000005px;line-height:16.06px;letter-spacing:0.1px;text-indent:0.1px">No Contact</div>
<div class="c" style="left:1083.7px;top:447.56px;width:86.29999999999995px;line-height:16.06px">No</div>
<div class="c" style="left:1170.0px;top:447.56px;width:85.29999999999995px;line-height:16.06px">No</div>
<div class="c" style="left:1255.3px;top:447.56px;width:113.90000000000009px;line-height:16.06px;letter-spacing:0.12px;text-indent:0.12px">06/29/2023 04:23 AM</div>
<div class="tri" style="left:913px;top:447.76px"></div>
<div class="c" style="left:249.5px;top:462.42px;width:94.69999999999999px;line-height:16.06px;letter-spacing:0.3px;text-indent:0.3px">7198</div>
<div class="c" style="left:344.2px;top:462.42px;width:175.09999999999997px;line-height:16.06px">Ngoc Nguyen</div>
<div class="c" style="left:519.3px;top:462.42px;width:283.20000000000005px;line-height:16.06px;letter-spacing:0.18px;text-indent:0.18px">620 E 50th St Tacoma, WA 98404</div>
<div class="c" style="left:802.5px;top:462.42px;width:109.70000000000005px;line-height:16.06px;letter-spacing:0.1px;text-indent:0.1px">AL new list 06/05/23</div>
<div class="c" style="left:912.2px;top:462.42px;width:85.79999999999995px;line-height:16.06px;letter-spacing:0.25px;text-indent:0.25px">2000000007</div>
<div class="c" style="left:998.0px;top:462.42px;width:85.70000000000005px;line-height:16.06px;letter-spacing:0.1px;text-indent:0.1px">No Contact</div>
<div class="c" style="left:1083.7px;top:462.42px;width:86.29999999999995px;line-height:16.06px">No</div>
<div class="c" style="left:1170.0px;top:462.42px;width:85.29999999999995px;line-height:16.06px">No</div>
<div class="c" style="left:1255.3px;top:462.42px;width:113.90000000000009px;line-height:16.06px;letter-spacing:0.12px;text-indent:0.12px">06/29/2023 04:22 AM</div>
<div class="tri" style="left:913px;top:462.62px"></div>
<div class="c" style="left:249.5px;top:477.28px;width:94.69999999999999px;line-height:16.06px;letter-spacing:0.3px;text-indent:0.3px">7199</div>
<div class="c" style="left:344.2px;top:477.28px;width:175.09999999999997px;line-height:16.06px">Ivry Nixon</div>
<div class="c" style="left:519.3px;top:477.28px;width:283.20000000000005px;line-height:16.06px;letter-spacing:0.18px;text-indent:0.18px">116 30th Ave E Tuscaloosa, AL 35404</div>
<div class="c" style="left:802.5px;top:477.28px;width:109.70000000000005px;line-height:16.06px;letter-spacing:0.1px;text-indent:0.1px">AL new list 06/05/23</div>
<div class="c" style="left:912.2px;top:477.28px;width:85.79999999999995px;line-height:16.06px;letter-spacing:0.25px;text-indent:0.25px">2000000001</div>
<div class="c" style="left:998.0px;top:477.28px;width:85.70000000000005px;line-height:16.06px;letter-spacing:0.1px;text-indent:0.1px">No Contact</div>
<div class="c" style="left:1083.7px;top:477.28px;width:86.29999999999995px;line-height:16.06px">No</div>
<div class="c" style="left:1170.0px;top:477.28px;width:85.29999999999995px;line-height:16.06px">No</div>
<div class="c" style="left:1255.3px;top:477.28px;width:113.90000000000009px;line-height:16.06px;letter-spacing:0.12px;text-indent:0.12px">06/29/2023 04:20 AM</div>
<div class="tri" style="left:913px;top:477.48px"></div>
<div class="c" style="left:249.5px;top:492.14px;width:94.69999999999999px;line-height:16.06px;letter-spacing:0.3px;text-indent:0.3px">7199</div>
<div class="c" style="left:344.2px;top:492.14px;width:175.09999999999997px;line-height:16.06px">Ivry Nixon</div>
<div class="c" style="left:519.3px;top:492.14px;width:283.20000000000005px;line-height:16.06px;letter-spacing:0.18px;text-indent:0.18px">116 30th Ave E Tuscaloosa, AL 35404</div>
<div class="c" style="left:802.5px;top:492.14px;width:109.70000000000005px;line-height:16.06px;letter-spacing:0.1px;text-indent:0.1px">AL new list 06/05/23</div>
<div class="c" style="left:912.2px;top:492.14px;width:85.79999999999995px;line-height:16.06px;letter-spacing:0.25px;text-indent:0.25px">2000000008</div>
<div class="c" style="left:998.0px;top:492.14px;width:85.70000000000005px;line-height:16.06px;letter-spacing:0.1px;text-indent:0.1px">No Answer</div>
<div class="c" style="left:1083.7px;top:492.14px;width:86.29999999999995px;line-height:16.06px">No</div>
<div class="c" style="left:1170.0px;top:492.14px;width:85.29999999999995px;line-height:16.06px">No</div>
<div class="c" style="left:1255.3px;top:492.14px;width:113.90000000000009px;line-height:16.06px;letter-spacing:0.12px;text-indent:0.12px">06/29/2023 04:19 AM</div>
<div class="tri" style="left:913px;top:492.34px"></div>
<div class="c" style="left:249.5px;top:507.00px;width:94.69999999999999px;line-height:16.06px;letter-spacing:0.3px;text-indent:0.3px">7199</div>
<div class="c" style="left:344.2px;top:507.00px;width:175.09999999999997px;line-height:16.06px">Ivry Nixon</div>
<div class="c" style="left:519.3px;top:507.00px;width:283.20000000000005px;line-height:16.06px;letter-spacing:0.18px;text-indent:0.18px">116 30th Ave E Tuscaloosa, AL 35404</div>
<div class="c" style="left:802.5px;top:507.00px;width:109.70000000000005px;line-height:16.06px;letter-spacing:0.1px;text-indent:0.1px">AL new list 06/05/23</div>
<div class="c" style="left:912.2px;top:507.00px;width:85.79999999999995px;line-height:16.06px;letter-spacing:0.25px;text-indent:0.25px">2000000004</div>
<div class="c" style="left:998.0px;top:507.00px;width:85.70000000000005px;line-height:16.06px;letter-spacing:0.1px;text-indent:0.1px">No Answer</div>
<div class="c" style="left:1083.7px;top:507.00px;width:86.29999999999995px;line-height:16.06px">No</div>
<div class="c" style="left:1170.0px;top:507.00px;width:85.29999999999995px;line-height:16.06px">No</div>
<div class="c" style="left:1255.3px;top:507.00px;width:113.90000000000009px;line-height:16.06px;letter-spacing:0.12px;text-indent:0.12px">06/29/2023 04:18 AM</div>
<div class="tri" style="left:913px;top:507.20px"></div>
<div class="c" style="left:249.5px;top:521.86px;width:94.69999999999999px;line-height:16.06px;letter-spacing:0.3px;text-indent:0.3px">7199</div>
<div class="c" style="left:344.2px;top:521.86px;width:175.09999999999997px;line-height:16.06px">Ivry Nixon</div>
<div class="c" style="left:519.3px;top:521.86px;width:283.20000000000005px;line-height:16.06px;letter-spacing:0.18px;text-indent:0.18px">116 30th Ave E Tuscaloosa, AL 35404</div>
<div class="c" style="left:802.5px;top:521.86px;width:109.70000000000005px;line-height:16.06px;letter-spacing:0.1px;text-indent:0.1px">AL new list 06/05/23</div>
<div class="c" style="left:912.2px;top:521.86px;width:85.79999999999995px;line-height:16.06px;letter-spacing:0.25px;text-indent:0.25px">2000000007</div>
<div class="c" style="left:998.0px;top:521.86px;width:85.70000000000005px;line-height:16.06px;letter-spacing:0.1px;text-indent:0.1px">No Contact</div>
<div class="c" style="left:1083.7px;top:521.86px;width:86.29999999999995px;line-height:16.06px">No</div>
<div class="c" style="left:1170.0px;top:521.86px;width:85.29999999999995px;line-height:16.06px">No</div>
<div class="c" style="left:1255.3px;top:521.86px;width:113.90000000000009px;line-height:16.06px;letter-spacing:0.12px;text-indent:0.12px">06/29/2023 04:16 AM</div>
<div class="tri" style="left:913px;top:522.06px"></div>
<div class="c" style="left:249.5px;top:536.72px;width:94.69999999999999px;line-height:16.06px;letter-spacing:0.3px;text-indent:0.3px">7200</div>
<div class="c" style="left:344.2px;top:536.72px;width:175.09999999999997px;line-height:16.06px">Veasna Oum</div>
<div class="c" style="left:519.3px;top:536.72px;width:283.20000000000005px;line-height:16.06px;letter-spacing:0.18px;text-indent:0.18px">15228 40th Ave S Tukwila, WA 98188</div>
<div class="c" style="left:802.5px;top:536.72px;width:109.70000000000005px;line-height:16.06px;letter-spacing:0.1px;text-indent:0.1px">AL new list 06/05/23</div>
<div class="c" style="left:912.2px;top:536.72px;width:85.79999999999995px;line-height:16.06px;letter-spacing:0.25px;text-indent:0.25px">4000000003</div>
<div class="c" style="left:998.0px;top:536.72px;width:85.70000000000005px;line-height:16.06px;letter-spacing:0.1px;text-indent:0.1px">Contact</div>
<div class="c" style="left:1083.7px;top:536.72px;width:86.29999999999995px;line-height:16.06px;font-weight:bold;color:#666">Yes</div>
<div class="c" style="left:1170.0px;top:536.72px;width:85.29999999999995px;line-height:16.06px;font-weight:bold;color:#666">Yes</div>
<div class="c" style="left:1255.3px;top:536.72px;width:113.90000000000009px;line-height:16.06px;letter-spacing:0.12px;text-indent:0.12px">06/29/2023 04:15 AM</div>
<div class="tri" style="left:913px;top:536.92px"></div>
<div class="c" style="left:249.5px;top:551.58px;width:94.69999999999999px;line-height:16.06px;letter-spacing:0.3px;text-indent:0.3px">7200</div>
<div class="c" style="left:344.2px;top:551.58px;width:175.09999999999997px;line-height:16.06px">Veasna Oum</div>
<div class="c" style="left:519.3px;top:551.58px;width:283.20000000000005px;line-height:16.06px;letter-spacing:0.18px;text-indent:0.18px">15228 40th Ave S Tukwila, WA 98188</div>
<div class="c" style="left:802.5px;top:551.58px;width:109.70000000000005px;line-height:16.06px;letter-spacing:0.1px;text-indent:0.1px">AL new list 06/05/23</div>
<div class="c" style="left:912.2px;top:551.58px;width:85.79999999999995px;line-height:16.06px;letter-spacing:0.25px;text-indent:0.25px">2000000001</div>
<div class="c" style="left:998.0px;top:551.58px;width:85.70000000000005px;line-height:16.06px;letter-spacing:0.1px;text-indent:0.1px">No Answer</div>
<div class="c" style="left:1083.7px;top:551.58px;width:86.29999999999995px;line-height:16.06px">No</div>
<div class="c" style="left:1170.0px;top:551.58px;width:85.29999999999995px;line-height:16.06px">No</div>
<div class="c" style="left:1255.3px;top:551.58px;width:113.90000000000009px;line-height:16.06px;letter-spacing:0.12px;text-indent:0.12px">06/29/2023 04:14 AM</div>
<div class="tri" style="left:913px;top:551.78px"></div>
<div class="c" style="left:249.5px;top:566.44px;width:94.69999999999999px;line-height:16.06px;letter-spacing:0.3px;text-indent:0.3px">7200</div>
<div class="c" style="left:344.2px;top:566.44px;width:175.09999999999997px;line-height:16.06px">Veasna Oum</div>
<div class="c" style="left:519.3px;top:566.44px;width:283.20000000000005px;line-height:16.06px;letter-spacing:0.18px;text-indent:0.18px">15228 40th Ave S Tukwila, WA 98188</div>
<div class="c" style="left:802.5px;top:566.44px;width:109.70000000000005px;line-height:16.06px;letter-spacing:0.1px;text-indent:0.1px">AL new list 06/05/23</div>
<div class="c" style="left:912.2px;top:566.44px;width:85.79999999999995px;line-height:16.06px;letter-spacing:0.25px;text-indent:0.25px">4000000006</div>
<div class="c" style="left:998.0px;top:566.44px;width:85.70000000000005px;line-height:16.06px;letter-spacing:0.1px;text-indent:0.1px">No Answer</div>
<div class="c" style="left:1083.7px;top:566.44px;width:86.29999999999995px;line-height:16.06px">No</div>
<div class="c" style="left:1170.0px;top:566.44px;width:85.29999999999995px;line-height:16.06px">No</div>
<div class="c" style="left:1255.3px;top:566.44px;width:113.90000000000009px;line-height:16.06px;letter-spacing:0.12px;text-indent:0.12px">06/29/2023 04:12 AM</div>
<div class="tri" style="left:913px;top:566.64px"></div>
<div class="c" style="left:249.5px;top:581.30px;width:94.69999999999999px;line-height:16.06px;letter-spacing:0.3px;text-indent:0.3px">7200</div>
<div class="c" style="left:344.2px;top:581.30px;width:175.09999999999997px;line-height:16.06px">Veasna Oum</div>
<div class="c" style="left:519.3px;top:581.30px;width:283.20000000000005px;line-height:16.06px;letter-spacing:0.18px;text-indent:0.18px">15228 40th Ave S Tukwila, WA 98188</div>
<div class="c" style="left:802.5px;top:581.30px;width:109.70000000000005px;line-height:16.06px;letter-spacing:0.1px;text-indent:0.1px">AL new list 06/05/23</div>
<div class="c" style="left:912.2px;top:581.30px;width:85.79999999999995px;line-height:16.06px;letter-spacing:0.25px;text-indent:0.25px">4000000000</div>
<div class="c" style="left:998.0px;top:581.30px;width:85.70000000000005px;line-height:16.06px;letter-spacing:0.1px;text-indent:0.1px">No Answer</div>
<div class="c" style="left:1083.7px;top:581.30px;width:86.29999999999995px;line-height:16.06px">No</div>
<div class="c" style="left:1170.0px;top:581.30px;width:85.29999999999995px;line-height:16.06px">No</div>
<div class="c" style="left:1255.3px;top:581.30px;width:113.90000000000009px;line-height:16.06px;letter-spacing:0.12px;text-indent:0.12px">06/29/2023 04:11 AM</div>
<div class="tri" style="left:913px;top:581.50px"></div>
<div class="c" style="left:249.5px;top:596.16px;width:94.69999999999999px;line-height:16.06px;letter-spacing:0.3px;text-indent:0.3px">7200</div>
<div class="c" style="left:344.2px;top:596.16px;width:175.09999999999997px;line-height:16.06px">Veasna Oum</div>
<div class="c" style="left:519.3px;top:596.16px;width:283.20000000000005px;line-height:16.06px;letter-spacing:0.18px;text-indent:0.18px">15228 40th Ave S Tukwila, WA 98188</div>
<div class="c" style="left:802.5px;top:596.16px;width:109.70000000000005px;line-height:16.06px;letter-spacing:0.1px;text-indent:0.1px">AL new list 06/05/23</div>
<div class="c" style="left:912.2px;top:596.16px;width:85.79999999999995px;line-height:16.06px;letter-spacing:0.25px;text-indent:0.25px">4000000004</div>
<div class="c" style="left:998.0px;top:596.16px;width:85.70000000000005px;line-height:16.06px;letter-spacing:0.1px;text-indent:0.1px">No Answer</div>
<div class="c" style="left:1083.7px;top:596.16px;width:86.29999999999995px;line-height:16.06px">No</div>
<div class="c" style="left:1170.0px;top:596.16px;width:85.29999999999995px;line-height:16.06px">No</div>
<div class="c" style="left:1255.3px;top:596.16px;width:113.90000000000009px;line-height:16.06px;letter-spacing:0.12px;text-indent:0.12px">06/29/2023 04:09 AM</div>
<div class="tri" style="left:913px;top:596.36px"></div>
<div class="c" style="left:249.5px;top:611.02px;width:94.69999999999999px;line-height:16.06px;letter-spacing:0.3px;text-indent:0.3px">7200</div>
<div class="c" style="left:344.2px;top:611.02px;width:175.09999999999997px;line-height:16.06px">Veasna Oum</div>
<div class="c" style="left:519.3px;top:611.02px;width:283.20000000000005px;line-height:16.06px;letter-spacing:0.18px;text-indent:0.18px">15228 40th Ave S Tukwila, WA 98188</div>
<div class="c" style="left:802.5px;top:611.02px;width:109.70000000000005px;line-height:16.06px;letter-spacing:0.1px;text-indent:0.1px">AL new list 06/05/23</div>
<div class="c" style="left:912.2px;top:611.02px;width:85.79999999999995px;line-height:16.06px;letter-spacing:0.25px;text-indent:0.25px">4000000000</div>
<div class="c" style="left:998.0px;top:611.02px;width:85.70000000000005px;line-height:16.06px;letter-spacing:0.1px;text-indent:0.1px">No Contact</div>
<div class="c" style="left:1083.7px;top:611.02px;width:86.29999999999995px;line-height:16.06px">No</div>
<div class="c" style="left:1170.0px;top:611.02px;width:85.29999999999995px;line-height:16.06px">No</div>
<div class="c" style="left:1255.3px;top:611.02px;width:113.90000000000009px;line-height:16.06px;letter-spacing:0.12px;text-indent:0.12px">06/29/2023 04:08 AM</div>
<div class="tri" style="left:913px;top:611.22px"></div>
<div class="c" style="left:249.5px;top:625.88px;width:94.69999999999999px;line-height:16.06px;letter-spacing:0.3px;text-indent:0.3px">7201</div>
<div class="c" style="left:344.2px;top:625.88px;width:175.09999999999997px;line-height:16.06px">Justina Palmore</div>
<div class="c" style="left:519.3px;top:625.88px;width:283.20000000000005px;line-height:16.06px;letter-spacing:0.18px;text-indent:0.18px">708 Louise Dr W Mobile, AL 36606</div>
<div class="c" style="left:802.5px;top:625.88px;width:109.70000000000005px;line-height:16.06px;letter-spacing:0.1px;text-indent:0.1px">AL new list 06/05/23</div>
<div class="c" style="left:912.2px;top:625.88px;width:85.79999999999995px;line-height:16.06px;letter-spacing:0.25px;text-indent:0.25px">2000000009</div>
<div class="c" style="left:998.0px;top:625.88px;width:85.70000000000005px;line-height:16.06px;letter-spacing:0.1px;text-indent:0.1px">No Answer</div>
<div class="c" style="left:1083.7px;top:625.88px;width:86.29999999999995px;line-height:16.06px">No</div>
<div class="c" style="left:1170.0px;top:625.88px;width:85.29999999999995px;line-height:16.06px">No</div>
<div class="c" style="left:1255.3px;top:625.88px;width:113.90000000000009px;line-height:16.06px;letter-spacing:0.12px;text-indent:0.12px">06/29/2023 04:07 AM</div>
<div class="tri" style="left:913px;top:626.08px"></div>
<div class="c" style="left:249.5px;top:640.74px;width:94.69999999999999px;line-height:16.06px;letter-spacing:0.3px;text-indent:0.3px">7201</div>
<div class="c" style="left:344.2px;top:640.74px;width:175.09999999999997px;line-height:16.06px">Justina Palmore</div>
<div class="c" style="left:519.3px;top:640.74px;width:283.20000000000005px;line-height:16.06px;letter-spacing:0.18px;text-indent:0.18px">708 Louise Dr W Mobile, AL 36606</div>
<div class="c" style="left:802.5px;top:640.74px;width:109.70000000000005px;line-height:16.06px;letter-spacing:0.1px;text-indent:0.1px">AL new list 06/05/23</div>
<div class="c" style="left:912.2px;top:640.74px;width:85.79999999999995px;line-height:16.06px;letter-spacing:0.25px;text-indent:0.25px">3000000001</div>
<div class="c" style="left:998.0px;top:640.74px;width:85.70000000000005px;line-height:16.06px;letter-spacing:0.1px;text-indent:0.1px">Other</div>
<div class="c" style="left:1083.7px;top:640.74px;width:86.29999999999995px;line-height:16.06px">No</div>
<div class="c" style="left:1170.0px;top:640.74px;width:85.29999999999995px;line-height:16.06px">No</div>
<div class="c" style="left:1255.3px;top:640.74px;width:113.90000000000009px;line-height:16.06px;letter-spacing:0.12px;text-indent:0.12px">06/29/2023 04:05 AM</div>
<div class="tri" style="left:913px;top:640.94px"></div>
<div class="c" style="left:249.5px;top:655.60px;width:94.69999999999999px;line-height:16.06px;letter-spacing:0.3px;text-indent:0.3px">7201</div>
<div class="c" style="left:344.2px;top:655.60px;width:175.09999999999997px;line-height:16.06px">Justina Palmore</div>
<div class="c" style="left:519.3px;top:655.60px;width:283.20000000000005px;line-height:16.06px;letter-spacing:0.18px;text-indent:0.18px">708 Louise Dr W Mobile, AL 36606</div>
<div class="c" style="left:802.5px;top:655.60px;width:109.70000000000005px;line-height:16.06px;letter-spacing:0.1px;text-indent:0.1px">AL new list 06/05/23</div>
<div class="c" style="left:912.2px;top:655.60px;width:85.79999999999995px;line-height:16.06px;letter-spacing:0.25px;text-indent:0.25px">2000000001</div>
<div class="c" style="left:998.0px;top:655.60px;width:85.70000000000005px;line-height:16.06px;letter-spacing:0.1px;text-indent:0.1px">No Answer</div>
<div class="c" style="left:1083.7px;top:655.60px;width:86.29999999999995px;line-height:16.06px">No</div>
<div class="c" style="left:1170.0px;top:655.60px;width:85.29999999999995px;line-height:16.06px">No</div>
<div class="c" style="left:1255.3px;top:655.60px;width:113.90000000000009px;line-height:16.06px;letter-spacing:0.12px;text-indent:0.12px">06/29/2023 04:04 AM</div>
<div class="tri" style="left:913px;top:655.80px"></div>
<div class="c" style="left:249.5px;top:670.46px;width:94.69999999999999px;line-height:16.06px;letter-spacing:0.3px;text-indent:0.3px">7201</div>
<div class="c" style="left:344.2px;top:670.46px;width:175.09999999999997px;line-height:16.06px">Justina Palmore</div>
<div class="c" style="left:519.3px;top:670.46px;width:283.20000000000005px;line-height:16.06px;letter-spacing:0.18px;text-indent:0.18px">708 Louise Dr W Mobile, AL 36606</div>
<div class="c" style="left:802.5px;top:670.46px;width:109.70000000000005px;line-height:16.06px;letter-spacing:0.1px;text-indent:0.1px">AL new list 06/05/23</div>
<div class="c" style="left:912.2px;top:670.46px;width:85.79999999999995px;line-height:16.06px;letter-spacing:0.25px;text-indent:0.25px">2000000009</div>
<div class="c" style="left:998.0px;top:670.46px;width:85.70000000000005px;line-height:16.06px;letter-spacing:0.1px;text-indent:0.1px">No Answer</div>
<div class="c" style="left:1083.7px;top:670.46px;width:86.29999999999995px;line-height:16.06px">No</div>
<div class="c" style="left:1170.0px;top:670.46px;width:85.29999999999995px;line-height:16.06px">No</div>
<div class="c" style="left:1255.3px;top:670.46px;width:113.90000000000009px;line-height:16.06px;letter-spacing:0.12px;text-indent:0.12px">06/29/2023 04:03 AM</div>
<div class="tri" style="left:913px;top:670.66px"></div>
<div class="c" style="left:249.5px;top:685.32px;width:94.69999999999999px;line-height:16.06px;letter-spacing:0.3px;text-indent:0.3px">7201</div>
<div class="c" style="left:344.2px;top:685.32px;width:175.09999999999997px;line-height:16.06px">Justina Palmore</div>
<div class="c" style="left:519.3px;top:685.32px;width:283.20000000000005px;line-height:16.06px;letter-spacing:0.18px;text-indent:0.18px">708 Louise Dr W Mobile, AL 36606</div>
<div class="c" style="left:802.5px;top:685.32px;width:109.70000000000005px;line-height:16.06px;letter-spacing:0.1px;text-indent:0.1px">AL new list 06/05/23</div>
<div class="c" style="left:912.2px;top:685.32px;width:85.79999999999995px;line-height:16.06px;letter-spacing:0.25px;text-indent:0.25px">2000000007</div>
<div class="c" style="left:998.0px;top:685.32px;width:85.70000000000005px;line-height:16.06px;letter-spacing:0.1px;text-indent:0.1px">Busy</div>
<div class="c" style="left:1083.7px;top:685.32px;width:86.29999999999995px;line-height:16.06px">No</div>
<div class="c" style="left:1170.0px;top:685.32px;width:85.29999999999995px;line-height:16.06px">No</div>
<div class="c" style="left:1255.3px;top:685.32px;width:113.90000000000009px;line-height:16.06px;letter-spacing:0.12px;text-indent:0.12px">06/29/2023 04:02 AM</div>
<div class="tri" style="left:913px;top:685.52px"></div>
<div class="c" style="left:249.5px;top:700.18px;width:94.69999999999999px;line-height:16.06px;letter-spacing:0.3px;text-indent:0.3px">7201</div>
<div class="c" style="left:344.2px;top:700.18px;width:175.09999999999997px;line-height:16.06px">Justina Palmore</div>
<div class="c" style="left:519.3px;top:700.18px;width:283.20000000000005px;line-height:16.06px;letter-spacing:0.18px;text-indent:0.18px">708 Louise Dr W Mobile, AL 36606</div>
<div class="c" style="left:802.5px;top:700.18px;width:109.70000000000005px;line-height:16.06px;letter-spacing:0.1px;text-indent:0.1px">AL new list 06/05/23</div>
<div class="c" style="left:912.2px;top:700.18px;width:85.79999999999995px;line-height:16.06px;letter-spacing:0.25px;text-indent:0.25px">2000000001</div>
<div class="c" style="left:998.0px;top:700.18px;width:85.70000000000005px;line-height:16.06px;letter-spacing:0.1px;text-indent:0.1px">No Contact</div>
<div class="c" style="left:1083.7px;top:700.18px;width:86.29999999999995px;line-height:16.06px">No</div>
<div class="c" style="left:1170.0px;top:700.18px;width:85.29999999999995px;line-height:16.06px">No</div>
<div class="c" style="left:1255.3px;top:700.18px;width:113.90000000000009px;line-height:16.06px;letter-spacing:0.12px;text-indent:0.12px">06/29/2023 04:02 AM</div>
<div class="tri" style="left:913px;top:700.38px"></div>
<div class="c" style="left:249.5px;top:715.04px;width:94.69999999999999px;line-height:16.06px;letter-spacing:0.3px;text-indent:0.3px">7202</div>
<div class="c" style="left:344.2px;top:715.04px;width:175.09999999999997px;line-height:16.06px">Candance Prestridge</div>
<div class="c" style="left:519.3px;top:715.04px;width:283.20000000000005px;line-height:16.06px;letter-spacing:0.18px;text-indent:0.18px">9320 Coleman Dairy Rd E Semmes, AL 36575</div>
<div class="c" style="left:802.5px;top:715.04px;width:109.70000000000005px;line-height:16.06px;letter-spacing:0.1px;text-indent:0.1px">AL new list 06/05/23</div>
<div class="c" style="left:912.2px;top:715.04px;width:85.79999999999995px;line-height:16.06px;letter-spacing:0.25px;text-indent:0.25px">2000000005</div>
<div class="c" style="left:998.0px;top:715.04px;width:85.70000000000005px;line-height:16.06px;letter-spacing:0.1px;text-indent:0.1px">No Answer</div>
<div class="c" style="left:1083.7px;top:715.04px;width:86.29999999999995px;line-height:16.06px">No</div>
<div class="c" style="left:1170.0px;top:715.04px;width:85.29999999999995px;line-height:16.06px">No</div>
<div class="c" style="left:1255.3px;top:715.04px;width:113.90000000000009px;line-height:16.06px;letter-spacing:0.12px;text-indent:0.12px">06/29/2023 04:01 AM</div>
<div class="tri" style="left:913px;top:715.24px"></div>
<div class="c" style="left:249.5px;top:729.90px;width:94.69999999999999px;line-height:16.06px;letter-spacing:0.3px;text-indent:0.3px">7202</div>
<div class="c" style="left:344.2px;top:729.90px;width:175.09999999999997px;line-height:16.06px">Candance Prestridge</div>
<div class="c" style="left:519.3px;top:729.90px;width:283.20000000000005px;line-height:16.06px;letter-spacing:0.18px;text-indent:0.18px">9320 Coleman Dairy Rd E Semmes, AL 36575</div>
<div class="c" style="left:802.5px;top:729.90px;width:109.70000000000005px;line-height:16.06px;letter-spacing:0.1px;text-indent:0.1px">AL new list 06/05/23</div>
<div class="c" style="left:912.2px;top:729.90px;width:85.79999999999995px;line-height:16.06px;letter-spacing:0.25px;text-indent:0.25px">2000000008</div>
<div class="c" style="left:998.0px;top:729.90px;width:85.70000000000005px;line-height:16.06px;letter-spacing:0.1px;text-indent:0.1px">No Answer</div>
<div class="c" style="left:1083.7px;top:729.90px;width:86.29999999999995px;line-height:16.06px">No</div>
<div class="c" style="left:1170.0px;top:729.90px;width:85.29999999999995px;line-height:16.06px">No</div>
<div class="c" style="left:1255.3px;top:729.90px;width:113.90000000000009px;line-height:16.06px;letter-spacing:0.12px;text-indent:0.12px">06/29/2023 04:00 AM</div>
<div class="tri" style="left:913px;top:730.10px"></div>
<div class="c" style="left:249.5px;top:744.76px;width:94.69999999999999px;line-height:16.06px;letter-spacing:0.3px;text-indent:0.3px">7202</div>
<div class="c" style="left:344.2px;top:744.76px;width:175.09999999999997px;line-height:16.06px">Candance Prestridge</div>
<div class="c" style="left:519.3px;top:744.76px;width:283.20000000000005px;line-height:16.06px;letter-spacing:0.18px;text-indent:0.18px">9320 Coleman Dairy Rd E Semmes, AL 36575</div>
<div class="c" style="left:802.5px;top:744.76px;width:109.70000000000005px;line-height:16.06px;letter-spacing:0.1px;text-indent:0.1px">AL new list 06/05/23</div>
<div class="c" style="left:912.2px;top:744.76px;width:85.79999999999995px;line-height:16.06px;letter-spacing:0.25px;text-indent:0.25px">2000000008</div>
<div class="c" style="left:998.0px;top:744.76px;width:85.70000000000005px;line-height:16.06px;letter-spacing:0.1px;text-indent:0.1px">No Answer</div>
<div class="c" style="left:1083.7px;top:744.76px;width:86.29999999999995px;line-height:16.06px">No</div>
<div class="c" style="left:1170.0px;top:744.76px;width:85.29999999999995px;line-height:16.06px">No</div>
<div class="c" style="left:1255.3px;top:744.76px;width:113.90000000000009px;line-height:16.06px;letter-spacing:0.12px;text-indent:0.12px">06/29/2023 03:58 AM</div>
<div class="tri" style="left:913px;top:744.96px"></div>
<div class="c" style="left:249.5px;top:759.62px;width:94.69999999999999px;line-height:16.06px;letter-spacing:0.3px;text-indent:0.3px">7203</div>
<div class="c" style="left:344.2px;top:759.62px;width:175.09999999999997px;line-height:16.06px">Stephen Reed</div>
<div class="c" style="left:519.3px;top:759.62px;width:283.20000000000005px;line-height:16.06px;letter-spacing:0.18px;text-indent:0.18px">7598 Ryan Pl Wilmer, AL 36587</div>
<div class="c" style="left:802.5px;top:759.62px;width:109.70000000000005px;line-height:16.06px;letter-spacing:0.1px;text-indent:0.1px">AL new list 06/05/23</div>
<div class="c" style="left:912.2px;top:759.62px;width:85.79999999999995px;line-height:16.06px;letter-spacing:0.25px;text-indent:0.25px">2000000008</div>
<div class="c" style="left:998.0px;top:759.62px;width:85.70000000000005px;line-height:16.06px;letter-spacing:0.1px;text-indent:0.1px">No Contact</div>
<div class="c" style="left:1083.7px;top:759.62px;width:86.29999999999995px;line-height:16.06px">No</div>
<div class="c" style="left:1170.0px;top:759.62px;width:85.29999999999995px;line-height:16.06px">No</div>
<div class="c" style="left:1255.3px;top:759.62px;width:113.90000000000009px;line-height:16.06px;letter-spacing:0.12px;text-indent:0.12px">06/29/2023 03:56 AM</div>
<div class="tri" style="left:913px;top:759.82px"></div>
<div class="c" style="left:249.5px;top:774.48px;width:94.69999999999999px;line-height:16.06px;letter-spacing:0.3px;text-indent:0.3px">7203</div>
<div class="c" style="left:344.2px;top:774.48px;width:175.09999999999997px;line-height:16.06px">Stephen Reed</div>
<div class="c" style="left:519.3px;top:774.48px;width:283.20000000000005px;line-height:16.06px;letter-spacing:0.18px;text-indent:0.18px">7598 Ryan Pl Wilmer, AL 36587</div>
<div class="c" style="left:802.5px;top:774.48px;width:109.70000000000005px;line-height:16.06px;letter-spacing:0.1px;text-indent:0.1px">AL new list 06/05/23</div>
<div class="c" style="left:912.2px;top:774.48px;width:85.79999999999995px;line-height:16.06px;letter-spacing:0.25px;text-indent:0.25px">2000000009</div>
<div class="c" style="left:998.0px;top:774.48px;width:85.70000000000005px;line-height:16.06px;letter-spacing:0.1px;text-indent:0.1px">Fax</div>
<div class="c" style="left:1083.7px;top:774.48px;width:86.29999999999995px;line-height:16.06px">No</div>
<div class="c" style="left:1170.0px;top:774.48px;width:85.29999999999995px;line-height:16.06px">No</div>
<div class="c" style="left:1255.3px;top:774.48px;width:113.90000000000009px;line-height:16.06px;letter-spacing:0.12px;text-indent:0.12px">06/29/2023 03:56 AM</div>
<div class="tri" style="left:913px;top:774.68px"></div>
<div class="c" style="left:249.5px;top:789.34px;width:94.69999999999999px;line-height:16.06px;letter-spacing:0.3px;text-indent:0.3px">7203</div>
<div class="c" style="left:344.2px;top:789.34px;width:175.09999999999997px;line-height:16.06px">Stephen Reed</div>
<div class="c" style="left:519.3px;top:789.34px;width:283.20000000000005px;line-height:16.06px;letter-spacing:0.18px;text-indent:0.18px">7598 Ryan Pl Wilmer, AL 36587</div>
<div class="c" style="left:802.5px;top:789.34px;width:109.70000000000005px;line-height:16.06px;letter-spacing:0.1px;text-indent:0.1px">AL new list 06/05/23</div>
<div class="c" style="left:912.2px;top:789.34px;width:85.79999999999995px;line-height:16.06px;letter-spacing:0.25px;text-indent:0.25px">2000000006</div>
<div class="c" style="left:998.0px;top:789.34px;width:85.70000000000005px;line-height:16.06px;letter-spacing:0.1px;text-indent:0.1px">No Answer</div>
<div class="c" style="left:1083.7px;top:789.34px;width:86.29999999999995px;line-height:16.06px">No</div>
<div class="c" style="left:1170.0px;top:789.34px;width:85.29999999999995px;line-height:16.06px">No</div>
<div class="c" style="left:1255.3px;top:789.34px;width:113.90000000000009px;line-height:16.06px;letter-spacing:0.12px;text-indent:0.12px">06/29/2023 03:55 AM</div>
<div class="tri" style="left:913px;top:789.54px"></div>
<div class="c" style="left:249.5px;top:804.20px;width:94.69999999999999px;line-height:16.06px;letter-spacing:0.3px;text-indent:0.3px">7203</div>
<div class="c" style="left:344.2px;top:804.20px;width:175.09999999999997px;line-height:16.06px">Stephen Reed</div>
<div class="c" style="left:519.3px;top:804.20px;width:283.20000000000005px;line-height:16.06px;letter-spacing:0.18px;text-indent:0.18px">7598 Ryan Pl Wilmer, AL 36587</div>
<div class="c" style="left:802.5px;top:804.20px;width:109.70000000000005px;line-height:16.06px;letter-spacing:0.1px;text-indent:0.1px">AL new list 06/05/23</div>
<div class="c" style="left:912.2px;top:804.20px;width:85.79999999999995px;line-height:16.06px;letter-spacing:0.25px;text-indent:0.25px">2000000005</div>
<div class="c" style="left:998.0px;top:804.20px;width:85.70000000000005px;line-height:16.06px;letter-spacing:0.1px;text-indent:0.1px">No Answer</div>
<div class="c" style="left:1083.7px;top:804.20px;width:86.29999999999995px;line-height:16.06px">No</div>
<div class="c" style="left:1170.0px;top:804.20px;width:85.29999999999995px;line-height:16.06px">No</div>
<div class="c" style="left:1255.3px;top:804.20px;width:113.90000000000009px;line-height:16.06px;letter-spacing:0.12px;text-indent:0.12px">06/29/2023 03:53 AM</div>
<div class="tri" style="left:913px;top:804.40px"></div>
<div class="c" style="left:249.5px;top:819.06px;width:94.69999999999999px;line-height:16.06px;letter-spacing:0.3px;text-indent:0.3px">7205</div>
<div class="c" style="left:344.2px;top:819.06px;width:175.09999999999997px;line-height:16.06px">Adela Rivera</div>
<div class="c" style="left:519.3px;top:819.06px;width:283.20000000000005px;line-height:16.06px;letter-spacing:0.18px;text-indent:0.18px">9052 Pacific Ave Tacoma, WA 98444</div>
<div class="c" style="left:802.5px;top:819.06px;width:109.70000000000005px;line-height:16.06px;letter-spacing:0.1px;text-indent:0.1px">AL new list 06/05/23</div>
<div class="c" style="left:912.2px;top:819.06px;width:85.79999999999995px;line-height:16.06px;letter-spacing:0.25px;text-indent:0.25px">2000000004</div>
<div class="c" style="left:998.0px;top:819.06px;width:85.70000000000005px;line-height:16.06px;letter-spacing:0.1px;text-indent:0.1px">No Answer</div>
<div class="c" style="left:1083.7px;top:819.06px;width:86.29999999999995px;line-height:16.06px">No</div>
<div class="c" style="left:1170.0px;top:819.06px;width:85.29999999999995px;line-height:16.06px">No</div>
<div class="c" style="left:1255.3px;top:819.06px;width:113.90000000000009px;line-height:16.06px;letter-spacing:0.12px;text-indent:0.12px">06/29/2023 03:51 AM</div>
<div class="tri" style="left:913px;top:819.26px"></div>
<div class="c" style="left:249.5px;top:833.92px;width:94.69999999999999px;line-height:16.06px;letter-spacing:0.3px;text-indent:0.3px">7207</div>
<div class="c" style="left:344.2px;top:833.92px;width:175.09999999999997px;line-height:16.06px">Richard Staken</div>
<div class="c" style="left:519.3px;top:833.92px;width:283.20000000000005px;line-height:16.06px;letter-spacing:0.18px;text-indent:0.18px">4129 E 4325 N Eden, UT 84310</div>
<div class="c" style="left:802.5px;top:833.92px;width:109.70000000000005px;line-height:16.06px;letter-spacing:0.1px;text-indent:0.1px">AL new list 06/05/23</div>
<div class="c" style="left:912.2px;top:833.92px;width:85.79999999999995px;line-height:16.06px;letter-spacing:0.25px;text-indent:0.25px">8000000003</div>
<div class="c" style="left:998.0px;top:833.92px;width:85.70000000000005px;line-height:16.06px;letter-spacing:0.1px;text-indent:0.1px">Fax</div>
<div class="c" style="left:1083.7px;top:833.92px;width:86.29999999999995px;line-height:16.06px">No</div>
<div class="c" style="left:1170.0px;top:833.92px;width:85.29999999999995px;line-height:16.06px">No</div>
<div class="c" style="left:1255.3px;top:833.92px;width:113.90000000000009px;line-height:16.06px;letter-spacing:0.12px;text-indent:0.12px">06/29/2023 03:50 AM</div>
<div class="tri" style="left:913px;top:834.12px"></div>
<div class="c" style="left:249.5px;top:848.78px;width:94.69999999999999px;line-height:16.06px;letter-spacing:0.3px;text-indent:0.3px">7207</div>
<div class="c" style="left:344.2px;top:848.78px;width:175.09999999999997px;line-height:16.06px">Richard Staken</div>
<div class="c" style="left:519.3px;top:848.78px;width:283.20000000000005px;line-height:16.06px;letter-spacing:0.18px;text-indent:0.18px">4129 E 4325 N Eden, UT 84310</div>
<div class="c" style="left:802.5px;top:848.78px;width:109.70000000000005px;line-height:16.06px;letter-spacing:0.1px;text-indent:0.1px">AL new list 06/05/23</div>
<div class="c" style="left:912.2px;top:848.78px;width:85.79999999999995px;line-height:16.06px;letter-spacing:0.25px;text-indent:0.25px">6000000004</div>
<div class="c" style="left:998.0px;top:848.78px;width:85.70000000000005px;line-height:16.06px;letter-spacing:0.1px;text-indent:0.1px">Fax</div>
<div class="c" style="left:1083.7px;top:848.78px;width:86.29999999999995px;line-height:16.06px">No</div>
<div class="c" style="left:1170.0px;top:848.78px;width:85.29999999999995px;line-height:16.06px">No</div>
<div class="c" style="left:1255.3px;top:848.78px;width:113.90000000000009px;line-height:16.06px;letter-spacing:0.12px;text-indent:0.12px">06/29/2023 03:49 AM</div>
<div class="tri" style="left:913px;top:848.98px"></div>
<div class="c" style="left:249.5px;top:863.64px;width:94.69999999999999px;line-height:16.06px;letter-spacing:0.3px;text-indent:0.3px">7207</div>
<div class="c" style="left:344.2px;top:863.64px;width:175.09999999999997px;line-height:16.06px">Richard Staken</div>
<div class="c" style="left:519.3px;top:863.64px;width:283.20000000000005px;line-height:16.06px;letter-spacing:0.18px;text-indent:0.18px">4129 E 4325 N Eden, UT 84310</div>
<div class="c" style="left:802.5px;top:863.64px;width:109.70000000000005px;line-height:16.06px;letter-spacing:0.1px;text-indent:0.1px">AL new list 06/05/23</div>
<div class="c" style="left:912.2px;top:863.64px;width:85.79999999999995px;line-height:16.06px;letter-spacing:0.25px;text-indent:0.25px">8000000003</div>
<div class="c" style="left:998.0px;top:863.64px;width:85.70000000000005px;line-height:16.06px;letter-spacing:0.1px;text-indent:0.1px">No Answer</div>
<div class="c" style="left:1083.7px;top:863.64px;width:86.29999999999995px;line-height:16.06px">No</div>
<div class="c" style="left:1170.0px;top:863.64px;width:85.29999999999995px;line-height:16.06px">No</div>
<div class="c" style="left:1255.3px;top:863.64px;width:113.90000000000009px;line-height:16.06px;letter-spacing:0.12px;text-indent:0.12px">06/29/2023 03:48 AM</div>
<div class="tri" style="left:913px;top:863.84px"></div>
<div class="c" style="left:249.5px;top:878.50px;width:94.69999999999999px;line-height:16.06px;letter-spacing:0.3px;text-indent:0.3px">7207</div>
<div class="c" style="left:344.2px;top:878.50px;width:175.09999999999997px;line-height:16.06px">Richard Staken</div>
<div class="c" style="left:519.3px;top:878.50px;width:283.20000000000005px;line-height:16.06px;letter-spacing:0.18px;text-indent:0.18px">4129 E 4325 N Eden, UT 84310</div>
<div class="c" style="left:802.5px;top:878.50px;width:109.70000000000005px;line-height:16.06px;letter-spacing:0.1px;text-indent:0.1px">AL new list 06/05/23</div>
<div class="c" style="left:912.2px;top:878.50px;width:85.79999999999995px;line-height:16.06px;letter-spacing:0.25px;text-indent:0.25px">6000000006</div>
<div class="c" style="left:998.0px;top:878.50px;width:85.70000000000005px;line-height:16.06px;letter-spacing:0.1px;text-indent:0.1px">Other</div>
<div class="c" style="left:1083.7px;top:878.50px;width:86.29999999999995px;line-height:16.06px">No</div>
<div class="c" style="left:1170.0px;top:878.50px;width:85.29999999999995px;line-height:16.06px">No</div>
<div class="c" style="left:1255.3px;top:878.50px;width:113.90000000000009px;line-height:16.06px;letter-spacing:0.12px;text-indent:0.12px">06/29/2023 03:47 AM</div>
<div class="tri" style="left:913px;top:878.70px"></div>
<div class="c" style="left:249.5px;top:893.36px;width:94.69999999999999px;line-height:16.06px;letter-spacing:0.3px;text-indent:0.3px">7207</div>
<div class="c" style="left:344.2px;top:893.36px;width:175.09999999999997px;line-height:16.06px">Richard Staken</div>
<div class="c" style="left:519.3px;top:893.36px;width:283.20000000000005px;line-height:16.06px;letter-spacing:0.18px;text-indent:0.18px">4129 E 4325 N Eden, UT 84310</div>
<div class="c" style="left:802.5px;top:893.36px;width:109.70000000000005px;line-height:16.06px;letter-spacing:0.1px;text-indent:0.1px">AL new list 06/05/23</div>
<div class="c" style="left:912.2px;top:893.36px;width:85.79999999999995px;line-height:16.06px;letter-spacing:0.25px;text-indent:0.25px">6000000001</div>
<div class="c" style="left:998.0px;top:893.36px;width:85.70000000000005px;line-height:16.06px;letter-spacing:0.1px;text-indent:0.1px">No Answer</div>
<div class="c" style="left:1083.7px;top:893.36px;width:86.29999999999995px;line-height:16.06px">No</div>
<div class="c" style="left:1170.0px;top:893.36px;width:85.29999999999995px;line-height:16.06px">No</div>
<div class="c" style="left:1255.3px;top:893.36px;width:113.90000000000009px;line-height:16.06px;letter-spacing:0.12px;text-indent:0.12px">06/29/2023 03:45 AM</div>
<div class="tri" style="left:913px;top:893.56px"></div>
<div class="c" style="left:249.5px;top:908.22px;width:94.69999999999999px;line-height:16.06px;letter-spacing:0.3px;text-indent:0.3px">7207</div>
<div class="c" style="left:344.2px;top:908.22px;width:175.09999999999997px;line-height:16.06px">Richard Staken</div>
<div class="c" style="left:519.3px;top:908.22px;width:283.20000000000005px;line-height:16.06px;letter-spacing:0.18px;text-indent:0.18px">4129 E 4325 N Eden, UT 84310</div>
<div class="c" style="left:802.5px;top:908.22px;width:109.70000000000005px;line-height:16.06px;letter-spacing:0.1px;text-indent:0.1px">AL new list 06/05/23</div>
<div class="c" style="left:912.2px;top:908.22px;width:85.79999999999995px;line-height:16.06px;letter-spacing:0.25px;text-indent:0.25px">6000000001</div>
<div class="c" style="left:998.0px;top:908.22px;width:85.70000000000005px;line-height:16.06px;letter-spacing:0.1px;text-indent:0.1px">No Answer</div>
<div class="c" style="left:1083.7px;top:908.22px;width:86.29999999999995px;line-height:16.06px">No</div>
<div class="c" style="left:1170.0px;top:908.22px;width:85.29999999999995px;line-height:16.06px">No</div>
<div class="c" style="left:1255.3px;top:908.22px;width:113.90000000000009px;line-height:16.06px;letter-spacing:0.12px;text-indent:0.12px">06/29/2023 03:44 AM</div>
<div class="tri" style="left:913px;top:908.42px"></div>
<div class="c" style="left:249.5px;top:923.08px;width:94.69999999999999px;line-height:16.06px;letter-spacing:0.3px;text-indent:0.3px">7207</div>
<div class="c" style="left:344.2px;top:923.08px;width:175.09999999999997px;line-height:16.06px">Richard Staken</div>
<div class="c" style="left:519.3px;top:923.08px;width:283.20000000000005px;line-height:16.06px;letter-spacing:0.18px;text-indent:0.18px">4129 E 4325 N Eden, UT 84310</div>
<div class="c" style="left:802.5px;top:923.08px;width:109.70000000000005px;line-height:16.06px;letter-spacing:0.1px;text-indent:0.1px">AL new list 06/05/23</div>
<div class="c" style="left:912.2px;top:923.08px;width:85.79999999999995px;line-height:16.06px;letter-spacing:0.25px;text-indent:0.25px">7000000018</div>
<div class="c" style="left:998.0px;top:923.08px;width:85.70000000000005px;line-height:16.06px;letter-spacing:0.1px;text-indent:0.1px">No Contact</div>
<div class="c" style="left:1083.7px;top:923.08px;width:86.29999999999995px;line-height:16.06px">No</div>
<div class="c" style="left:1170.0px;top:923.08px;width:85.29999999999995px;line-height:16.06px">No</div>
<div class="c" style="left:1255.3px;top:923.08px;width:113.90000000000009px;line-height:16.06px;letter-spacing:0.12px;text-indent:0.12px">06/29/2023 03:43 AM</div>
<div class="tri" style="left:913px;top:923.28px"></div>
<div class="tri" style="left:913px;top:938.14px"></div>
<div class="a" style="left:928.3px;top:206.1px;width:52.4px;height:726.7px;background:#fef0cd"></div>
<div class="t" style="left:928px;top:407.0px;width:53px;text-align:center;font-size:20px;font-weight:bold;color:#111;line-height:22px">C</div>
<div class="t" style="left:928px;top:434.7px;width:53px;text-align:center;font-size:20px;font-weight:bold;color:#111;line-height:22px">O</div>
<div class="t" style="left:928px;top:462.4px;width:53px;text-align:center;font-size:20px;font-weight:bold;color:#111;line-height:22px">N</div>
<div class="t" style="left:928px;top:490.1px;width:53px;text-align:center;font-size:20px;font-weight:bold;color:#111;line-height:22px">F</div>
<div class="t" style="left:928px;top:517.8px;width:53px;text-align:center;font-size:20px;font-weight:bold;color:#111;line-height:22px">I</div>
<div class="t" style="left:928px;top:545.5px;width:53px;text-align:center;font-size:20px;font-weight:bold;color:#111;line-height:22px">D</div>
<div class="t" style="left:928px;top:573.2px;width:53px;text-align:center;font-size:20px;font-weight:bold;color:#111;line-height:22px">E</div>
<div class="t" style="left:928px;top:600.9px;width:53px;text-align:center;font-size:20px;font-weight:bold;color:#111;line-height:22px">N</div>
<div class="t" style="left:928px;top:628.6px;width:53px;text-align:center;font-size:20px;font-weight:bold;color:#111;line-height:22px">T</div>
<div class="t" style="left:928px;top:656.3px;width:53px;text-align:center;font-size:20px;font-weight:bold;color:#111;line-height:22px">I</div>
<div class="t" style="left:928px;top:684.0px;width:53px;text-align:center;font-size:20px;font-weight:bold;color:#111;line-height:22px">A</div>
<div class="t" style="left:928px;top:711.7px;width:53px;text-align:center;font-size:20px;font-weight:bold;color:#111;line-height:22px">L</div>
<div class="a" style="left:1436.5px;top:684.82px;width:70px;height:15.86px;border:1.6px solid #217346;box-sizing:border-box"></div>
<div class="a" style="left:1503.5px;top:697.68px;width:4px;height:4px;background:#217346"></div>
<div class="a" style="left:1669px;top:123px;width:21px;height:819px;background:#e6e6e6"></div>
<div class="a" style="left:1669px;top:135px;width:1px;height:807px;background:#b9b9b9"></div>
<div class="a" style="left:1671.5px;top:141px;width:16.5px;height:785px;background:#d9d9d9"></div>
<div class="a" style="left:1671.5px;top:124px;width:16.5px;height:17px;background:#fff;border:1px solid #cdcdcd;box-sizing:border-box"></div>
<div class="a" style="left:1676px;top:130.5px;border-left:4px solid transparent;border-right:4px solid transparent;border-bottom:4px solid #555"></div>
<div class="a" style="left:1671.5px;top:141px;width:16.5px;height:17.5px;background:#fff;border:1px solid #cdcdcd;box-sizing:border-box"></div>
<div class="a" style="left:1671.5px;top:925.5px;width:16.5px;height:16.5px;background:#fff;border:1px solid #cdcdcd;box-sizing:border-box"></div>
<div class="a" style="left:1676px;top:932px;border-left:4px solid transparent;border-right:4px solid transparent;border-top:4px solid #555"></div>
<div class="a" style="left:230px;top:941px;width:1439.5px;height:1px;background:#c4c4c4"></div>
<div class="a" style="left:230px;top:942px;width:1460px;height:22px;background:#e6e6e6"></div>
<div class="a" style="left:1669px;top:941px;width:21px;height:1px;background:#e6e6e6"></div>
<div class="a" style="left:230px;top:964px;width:1460px;height:1px;background:#d6d6d6"></div>
<div class="a" style="left:250px;top:948.3px;border-top:3.8px solid transparent;border-bottom:3.8px solid transparent;border-right:4.3px solid #c4c4c4"></div>
<div class="a" style="left:273px;top:948.3px;border-top:3.8px solid transparent;border-bottom:3.8px solid transparent;border-left:4.3px solid #bcbcbc"></div>
<div class="a" style="left:310px;top:941px;width:129.5px;height:21.5px;background:#fff;border-left:1px solid #c8c8c8;border-right:1px solid #c8c8c8;box-sizing:border-box"></div>
<div class="a" style="left:310px;top:961px;width:129.5px;height:1.6px;background:#217346"></div>
<div class="t" style="left:318px;top:941px;line-height:22px;font-size:13.8px;font-weight:bold;color:#217346">Call Detail Report</div>
<svg class="a" style="left:465px;top:944px" width="17" height="17" viewBox="0 0 17 17"><circle cx="8.5" cy="8.5" r="7" fill="none" stroke="#707070" stroke-width="1"/><path d="M8.5 4.8 V12.2 M4.8 8.5 H12.2" stroke="#707070" stroke-width="1.1"/></svg>
<div class="a" style="left:1103.4px;top:947.4px;width:1.8px;height:1.8px;border-radius:50%;background:#8a8a8a"></div>
<div class="a" style="left:1103.4px;top:951.5px;width:1.8px;height:1.8px;border-radius:50%;background:#8a8a8a"></div>
<div class="a" style="left:1103.4px;top:955.6px;width:1.8px;height:1.8px;border-radius:50%;background:#8a8a8a"></div>
<div class="a" style="left:1117px;top:944.5px;width:553px;height:16px;background:#d9d9d9"></div>
<div class="a" style="left:1117px;top:944.3px;width:56px;height:16.6px;background:#fff;border:1px solid #c8c8c8;box-sizing:border-box"></div>
<div class="a" style="left:1133.3px;top:944.3px;width:1px;height:16.6px;background:#c0c0c0"></div>
<div class="a" style="left:1123px;top:948.5px;border-top:4px solid transparent;border-bottom:4px solid transparent;border-right:4px solid #555"></div>
<div class="a" style="left:1653.8px;top:944.4px;width:16.6px;height:16.4px;background:#fff;border:1px solid #cdcdcd;box-sizing:border-box"></div>
<div class="a" style="left:1660px;top:948.5px;border-top:4px solid transparent;border-bottom:4px solid transparent;border-left:4px solid #555"></div>
<div class="a" style="left:230px;top:965px;width:1460px;height:22px;background:#f3f2f1"></div>
<div class="t" style="left:238px;top:964.5px;line-height:23px;font-size:10.3px;color:#5c5c5c">Ready</div>
<div class="a" style="left:1395.5px;top:964.5px;width:40px;height:22.5px;background:#d4d4d4"></div>
<svg class="a" style="left:1400px;top:964px" width="300" height="22" viewBox="0 0 300 22">
<rect x="8.4" y="4.3" width="13.7" height="13.2" rx="1.5" fill="#555"/><rect x="10.0" y="6.0" width="2.4" height="2.4" fill="#fff" opacity="0.9"/><rect x="10.0" y="10.0" width="2.4" height="2.4" fill="#fff" opacity="0.9"/><rect x="10.0" y="14.0" width="2.4" height="2.4" fill="#fff" opacity="0.9"/><rect x="14.0" y="6.0" width="2.4" height="2.4" fill="#fff" opacity="0.9"/><rect x="14.0" y="10.0" width="2.4" height="2.4" fill="#fff" opacity="0.9"/><rect x="14.0" y="14.0" width="2.4" height="2.4" fill="#fff" opacity="0.9"/><rect x="18.0" y="6.0" width="2.4" height="2.4" fill="#fff" opacity="0.9"/><rect x="18.0" y="10.0" width="2.4" height="2.4" fill="#fff" opacity="0.9"/><rect x="18.0" y="14.0" width="2.4" height="2.4" fill="#fff" opacity="0.9"/>
<rect x="49.7" y="5" width="12.9" height="11.8" rx="1.6" fill="none" stroke="#5a5a5a" stroke-width="1.4"/>
<rect x="52.7" y="7.5" width="7" height="7" rx="0.8" fill="#bdbdbd" stroke="#6a6a6a" stroke-width="1.1"/>
<path d="M54.5 9.5 H58 M54.5 11 H58 M54.5 12.5 H58" stroke="#8a8a8a" stroke-width="0.6"/>
<rect x="90.4" y="5" width="12.6" height="11.8" rx="1.6" fill="none" stroke="#5a5a5a" stroke-width="1.4"/>
<path d="M90.5 12.3 H98.6 V5 M94.5 5 V12.3" fill="none" stroke="#5a5a5a" stroke-width="1.3"/>
<g stroke="#888" stroke-width="1.1"><path d="M122 11 H130"/><path d="M241 11 H249 M245 7 V15"/></g>
<path d="M136 11.3 H236" stroke="#5a5a5a" stroke-width="1.3"/><path d="M185.8 8.5 V13.5" stroke="#555" stroke-width="1.2"/>
<rect x="168" y="5.7" width="5.3" height="11" fill="#777"/>
</svg>
<div class="t" style="left:1661.5px;top:965px;line-height:23px;font-size:10.5px;color:#555">70%</div>
<div class="t" style="left:510px;top:994px;font-family:'Liberation Serif',serif;font-size:41px;color:#111;line-height:54px;transform:scaleX(0.956);transform-origin:0 0">DOCUMENTATION OF REPORT IN COLD CALLING</div>
</body></html>
